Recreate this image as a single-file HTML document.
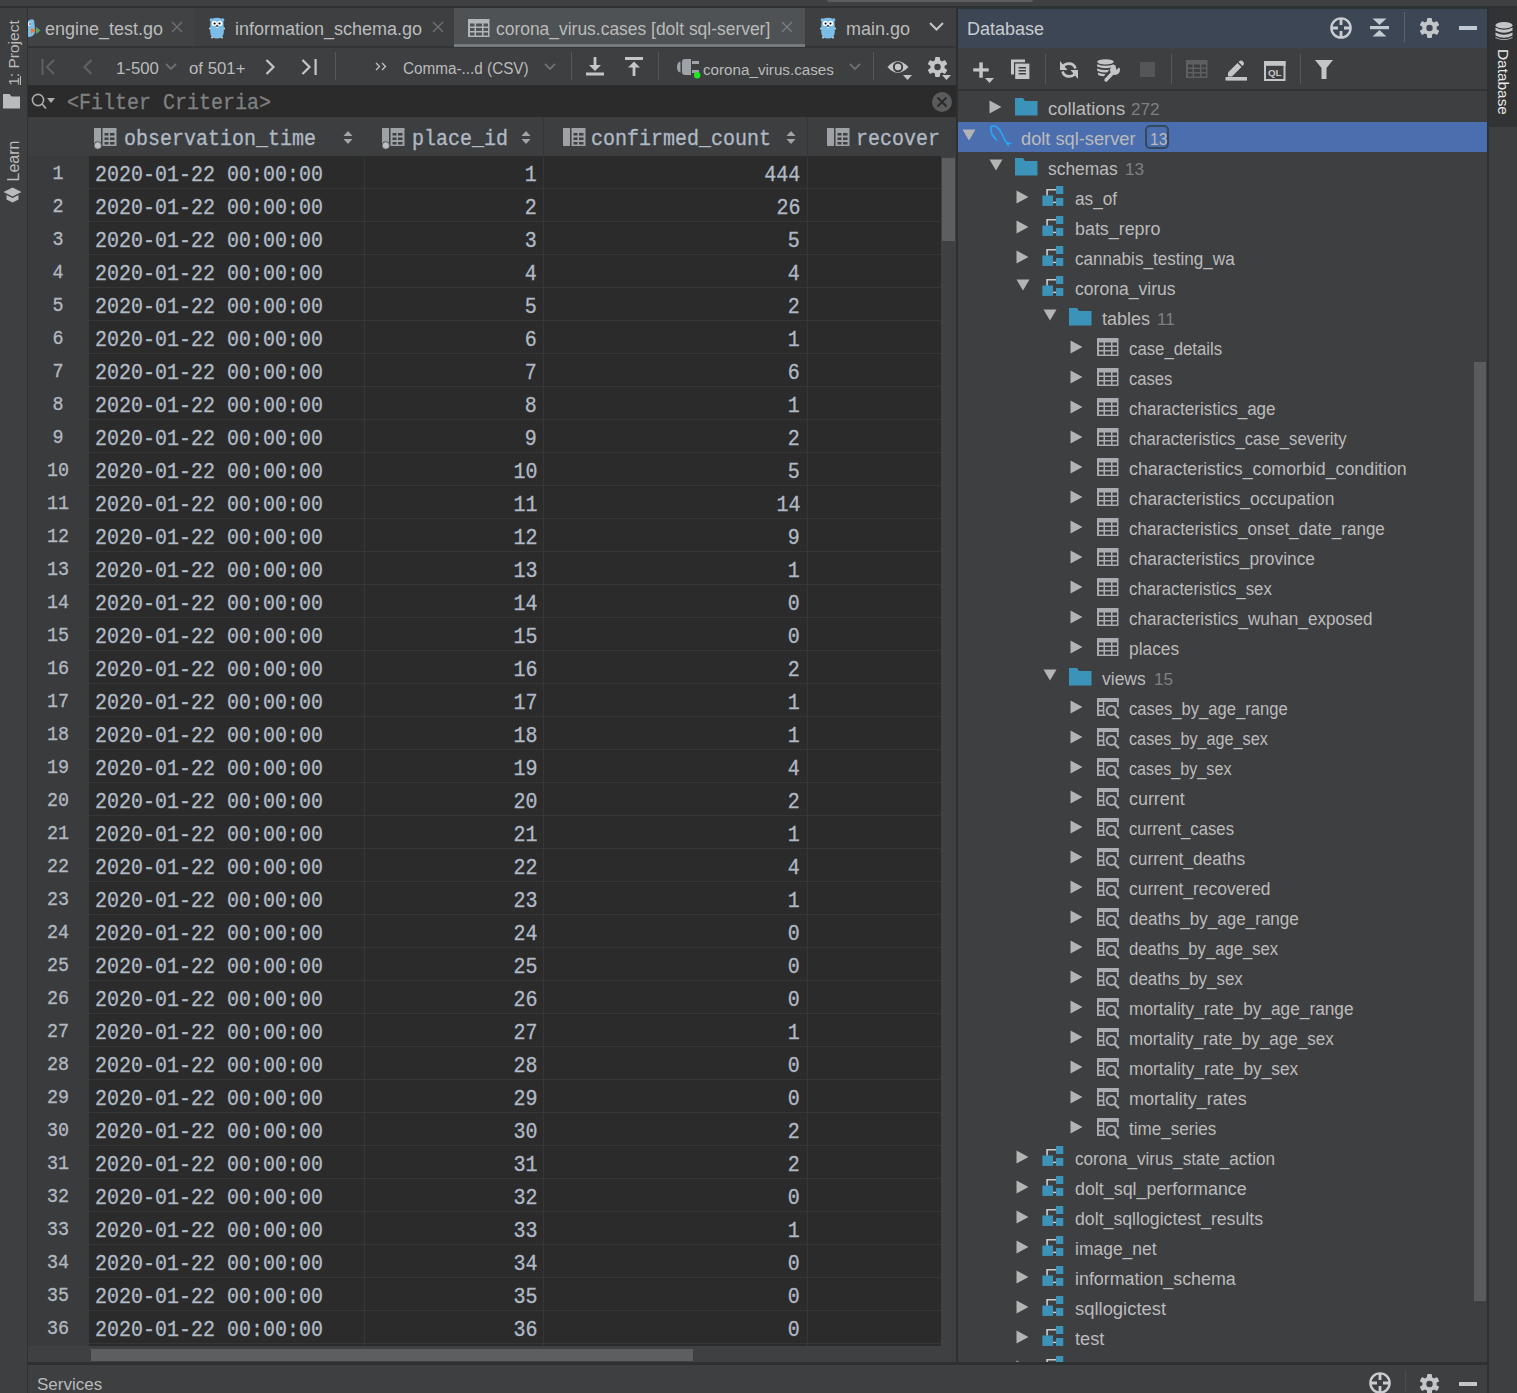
<!DOCTYPE html>
<html><head><meta charset="utf-8">
<style>
*{margin:0;padding:0;box-sizing:border-box}
html,body{width:1517px;height:1393px;overflow:hidden;background:#2f3133;font-family:"Liberation Sans",sans-serif;color:#bbbbbb}
.a{position:absolute}
.t{position:absolute;white-space:nowrap;line-height:20px}
.m{position:absolute;white-space:nowrap;font-family:"Liberation Mono",monospace;line-height:22px;-webkit-text-stroke:0.3px currentColor}
</style></head><body>
<div class="a" style="left:0px;top:0px;width:1517px;height:1393px;background:#3f4042;"></div>
<div class="a" style="left:827px;top:0px;width:206px;height:2px;background:#5c5d5f;border-radius:0 0 4px 4px"></div>
<div class="a" style="left:0px;top:6px;width:1517px;height:2px;background:#2f3133;"></div>
<div class="a" style="left:0px;top:8px;width:27px;height:1385px;background:#3d3f41;"></div>
<div class="a" style="left:27px;top:8px;width:1px;height:1385px;background:#303133;"></div>
<div class="a" style="left:28px;top:8px;width:928px;height:38px;background:#3d3f41;"></div>
<div class="a" style="left:28px;top:46px;width:928px;height:2px;background:#323436;"></div>
<div class="a" style="left:28px;top:48px;width:928px;height:37px;background:#3d3f41;"></div>
<div class="a" style="left:28px;top:85px;width:928px;height:32px;background:#2b2b2b;"></div>
<div class="a" style="left:28px;top:117px;width:928px;height:39px;background:#3c3e40;"></div>
<div class="a" style="left:28px;top:156px;width:61px;height:1206px;background:#3a3b3d;"></div>
<div class="a" style="left:89px;top:156px;width:852px;height:1190px;background:#2b2b2b;"></div>
<div class="a" style="left:941px;top:156px;width:15px;height:1206px;background:#3f4042;"></div>
<div class="a" style="left:28px;top:1346px;width:913px;height:16px;background:#3f4042;"></div>
<div class="a" style="left:956px;top:8px;width:2px;height:1385px;background:#2e2f31;"></div>
<div class="a" style="left:958px;top:6px;width:529px;height:3px;background:#2d3331;"></div>
<div class="a" style="left:958px;top:9px;width:529px;height:39px;background:#3d4654;"></div>
<div class="a" style="left:958px;top:48px;width:529px;height:41px;background:#3d3f41;"></div>
<div class="a" style="left:958px;top:89px;width:529px;height:2px;background:#313335;"></div>
<div class="a" style="left:958px;top:91px;width:529px;height:1271px;background:#3e3f41;"></div>
<div class="a" style="left:1487px;top:8px;width:2px;height:1385px;background:#2e2f31;"></div>
<div class="a" style="left:1489px;top:8px;width:28px;height:1385px;background:#3d3f41;"></div>
<div class="a" style="left:1489px;top:8px;width:28px;height:119px;background:#313335;"></div>
<div class="a" style="left:89px;top:188px;width:852px;height:1px;background:#353637;"></div>
<div class="m" style="left:18px;width:80px;top:161.50px;font-size:19.5px;line-height:24px;text-align:center;transform:scaleX(0.9434);transform-origin:50% 0;color:#b2b8c0;">1</div>
<div class="m" style="left:95px;top:163.35px;font-size:21.2px;line-height:24px;transform:scaleX(0.9434);transform-origin:0 0;color:#b0bac6;">2020-01-22 00:00:00</div>
<div class="m" style="right:980px;top:163.35px;font-size:21.2px;line-height:24px;text-align:right;transform:scaleX(0.9434);transform-origin:100% 0;color:#b0bac6;">1</div>
<div class="m" style="right:717px;top:163.35px;font-size:21.2px;line-height:24px;text-align:right;transform:scaleX(0.9434);transform-origin:100% 0;color:#b0bac6;">444</div>
<div class="a" style="left:89px;top:221px;width:852px;height:1px;background:#353637;"></div>
<div class="m" style="left:18px;width:80px;top:194.50px;font-size:19.5px;line-height:24px;text-align:center;transform:scaleX(0.9434);transform-origin:50% 0;color:#b2b8c0;">2</div>
<div class="m" style="left:95px;top:196.35px;font-size:21.2px;line-height:24px;transform:scaleX(0.9434);transform-origin:0 0;color:#b0bac6;">2020-01-22 00:00:00</div>
<div class="m" style="right:980px;top:196.35px;font-size:21.2px;line-height:24px;text-align:right;transform:scaleX(0.9434);transform-origin:100% 0;color:#b0bac6;">2</div>
<div class="m" style="right:717px;top:196.35px;font-size:21.2px;line-height:24px;text-align:right;transform:scaleX(0.9434);transform-origin:100% 0;color:#b0bac6;">26</div>
<div class="a" style="left:89px;top:254px;width:852px;height:1px;background:#353637;"></div>
<div class="m" style="left:18px;width:80px;top:227.50px;font-size:19.5px;line-height:24px;text-align:center;transform:scaleX(0.9434);transform-origin:50% 0;color:#b2b8c0;">3</div>
<div class="m" style="left:95px;top:229.35px;font-size:21.2px;line-height:24px;transform:scaleX(0.9434);transform-origin:0 0;color:#b0bac6;">2020-01-22 00:00:00</div>
<div class="m" style="right:980px;top:229.35px;font-size:21.2px;line-height:24px;text-align:right;transform:scaleX(0.9434);transform-origin:100% 0;color:#b0bac6;">3</div>
<div class="m" style="right:717px;top:229.35px;font-size:21.2px;line-height:24px;text-align:right;transform:scaleX(0.9434);transform-origin:100% 0;color:#b0bac6;">5</div>
<div class="a" style="left:89px;top:287px;width:852px;height:1px;background:#353637;"></div>
<div class="m" style="left:18px;width:80px;top:260.50px;font-size:19.5px;line-height:24px;text-align:center;transform:scaleX(0.9434);transform-origin:50% 0;color:#b2b8c0;">4</div>
<div class="m" style="left:95px;top:262.35px;font-size:21.2px;line-height:24px;transform:scaleX(0.9434);transform-origin:0 0;color:#b0bac6;">2020-01-22 00:00:00</div>
<div class="m" style="right:980px;top:262.35px;font-size:21.2px;line-height:24px;text-align:right;transform:scaleX(0.9434);transform-origin:100% 0;color:#b0bac6;">4</div>
<div class="m" style="right:717px;top:262.35px;font-size:21.2px;line-height:24px;text-align:right;transform:scaleX(0.9434);transform-origin:100% 0;color:#b0bac6;">4</div>
<div class="a" style="left:89px;top:320px;width:852px;height:1px;background:#353637;"></div>
<div class="m" style="left:18px;width:80px;top:293.50px;font-size:19.5px;line-height:24px;text-align:center;transform:scaleX(0.9434);transform-origin:50% 0;color:#b2b8c0;">5</div>
<div class="m" style="left:95px;top:295.35px;font-size:21.2px;line-height:24px;transform:scaleX(0.9434);transform-origin:0 0;color:#b0bac6;">2020-01-22 00:00:00</div>
<div class="m" style="right:980px;top:295.35px;font-size:21.2px;line-height:24px;text-align:right;transform:scaleX(0.9434);transform-origin:100% 0;color:#b0bac6;">5</div>
<div class="m" style="right:717px;top:295.35px;font-size:21.2px;line-height:24px;text-align:right;transform:scaleX(0.9434);transform-origin:100% 0;color:#b0bac6;">2</div>
<div class="a" style="left:89px;top:353px;width:852px;height:1px;background:#353637;"></div>
<div class="m" style="left:18px;width:80px;top:326.50px;font-size:19.5px;line-height:24px;text-align:center;transform:scaleX(0.9434);transform-origin:50% 0;color:#b2b8c0;">6</div>
<div class="m" style="left:95px;top:328.35px;font-size:21.2px;line-height:24px;transform:scaleX(0.9434);transform-origin:0 0;color:#b0bac6;">2020-01-22 00:00:00</div>
<div class="m" style="right:980px;top:328.35px;font-size:21.2px;line-height:24px;text-align:right;transform:scaleX(0.9434);transform-origin:100% 0;color:#b0bac6;">6</div>
<div class="m" style="right:717px;top:328.35px;font-size:21.2px;line-height:24px;text-align:right;transform:scaleX(0.9434);transform-origin:100% 0;color:#b0bac6;">1</div>
<div class="a" style="left:89px;top:386px;width:852px;height:1px;background:#353637;"></div>
<div class="m" style="left:18px;width:80px;top:359.50px;font-size:19.5px;line-height:24px;text-align:center;transform:scaleX(0.9434);transform-origin:50% 0;color:#b2b8c0;">7</div>
<div class="m" style="left:95px;top:361.35px;font-size:21.2px;line-height:24px;transform:scaleX(0.9434);transform-origin:0 0;color:#b0bac6;">2020-01-22 00:00:00</div>
<div class="m" style="right:980px;top:361.35px;font-size:21.2px;line-height:24px;text-align:right;transform:scaleX(0.9434);transform-origin:100% 0;color:#b0bac6;">7</div>
<div class="m" style="right:717px;top:361.35px;font-size:21.2px;line-height:24px;text-align:right;transform:scaleX(0.9434);transform-origin:100% 0;color:#b0bac6;">6</div>
<div class="a" style="left:89px;top:419px;width:852px;height:1px;background:#353637;"></div>
<div class="m" style="left:18px;width:80px;top:392.50px;font-size:19.5px;line-height:24px;text-align:center;transform:scaleX(0.9434);transform-origin:50% 0;color:#b2b8c0;">8</div>
<div class="m" style="left:95px;top:394.35px;font-size:21.2px;line-height:24px;transform:scaleX(0.9434);transform-origin:0 0;color:#b0bac6;">2020-01-22 00:00:00</div>
<div class="m" style="right:980px;top:394.35px;font-size:21.2px;line-height:24px;text-align:right;transform:scaleX(0.9434);transform-origin:100% 0;color:#b0bac6;">8</div>
<div class="m" style="right:717px;top:394.35px;font-size:21.2px;line-height:24px;text-align:right;transform:scaleX(0.9434);transform-origin:100% 0;color:#b0bac6;">1</div>
<div class="a" style="left:89px;top:452px;width:852px;height:1px;background:#353637;"></div>
<div class="m" style="left:18px;width:80px;top:425.50px;font-size:19.5px;line-height:24px;text-align:center;transform:scaleX(0.9434);transform-origin:50% 0;color:#b2b8c0;">9</div>
<div class="m" style="left:95px;top:427.35px;font-size:21.2px;line-height:24px;transform:scaleX(0.9434);transform-origin:0 0;color:#b0bac6;">2020-01-22 00:00:00</div>
<div class="m" style="right:980px;top:427.35px;font-size:21.2px;line-height:24px;text-align:right;transform:scaleX(0.9434);transform-origin:100% 0;color:#b0bac6;">9</div>
<div class="m" style="right:717px;top:427.35px;font-size:21.2px;line-height:24px;text-align:right;transform:scaleX(0.9434);transform-origin:100% 0;color:#b0bac6;">2</div>
<div class="a" style="left:89px;top:485px;width:852px;height:1px;background:#353637;"></div>
<div class="m" style="left:18px;width:80px;top:458.50px;font-size:19.5px;line-height:24px;text-align:center;transform:scaleX(0.9434);transform-origin:50% 0;color:#b2b8c0;">10</div>
<div class="m" style="left:95px;top:460.35px;font-size:21.2px;line-height:24px;transform:scaleX(0.9434);transform-origin:0 0;color:#b0bac6;">2020-01-22 00:00:00</div>
<div class="m" style="right:980px;top:460.35px;font-size:21.2px;line-height:24px;text-align:right;transform:scaleX(0.9434);transform-origin:100% 0;color:#b0bac6;">10</div>
<div class="m" style="right:717px;top:460.35px;font-size:21.2px;line-height:24px;text-align:right;transform:scaleX(0.9434);transform-origin:100% 0;color:#b0bac6;">5</div>
<div class="a" style="left:89px;top:518px;width:852px;height:1px;background:#353637;"></div>
<div class="m" style="left:18px;width:80px;top:491.50px;font-size:19.5px;line-height:24px;text-align:center;transform:scaleX(0.9434);transform-origin:50% 0;color:#b2b8c0;">11</div>
<div class="m" style="left:95px;top:493.35px;font-size:21.2px;line-height:24px;transform:scaleX(0.9434);transform-origin:0 0;color:#b0bac6;">2020-01-22 00:00:00</div>
<div class="m" style="right:980px;top:493.35px;font-size:21.2px;line-height:24px;text-align:right;transform:scaleX(0.9434);transform-origin:100% 0;color:#b0bac6;">11</div>
<div class="m" style="right:717px;top:493.35px;font-size:21.2px;line-height:24px;text-align:right;transform:scaleX(0.9434);transform-origin:100% 0;color:#b0bac6;">14</div>
<div class="a" style="left:89px;top:551px;width:852px;height:1px;background:#353637;"></div>
<div class="m" style="left:18px;width:80px;top:524.50px;font-size:19.5px;line-height:24px;text-align:center;transform:scaleX(0.9434);transform-origin:50% 0;color:#b2b8c0;">12</div>
<div class="m" style="left:95px;top:526.35px;font-size:21.2px;line-height:24px;transform:scaleX(0.9434);transform-origin:0 0;color:#b0bac6;">2020-01-22 00:00:00</div>
<div class="m" style="right:980px;top:526.35px;font-size:21.2px;line-height:24px;text-align:right;transform:scaleX(0.9434);transform-origin:100% 0;color:#b0bac6;">12</div>
<div class="m" style="right:717px;top:526.35px;font-size:21.2px;line-height:24px;text-align:right;transform:scaleX(0.9434);transform-origin:100% 0;color:#b0bac6;">9</div>
<div class="a" style="left:89px;top:584px;width:852px;height:1px;background:#353637;"></div>
<div class="m" style="left:18px;width:80px;top:557.50px;font-size:19.5px;line-height:24px;text-align:center;transform:scaleX(0.9434);transform-origin:50% 0;color:#b2b8c0;">13</div>
<div class="m" style="left:95px;top:559.35px;font-size:21.2px;line-height:24px;transform:scaleX(0.9434);transform-origin:0 0;color:#b0bac6;">2020-01-22 00:00:00</div>
<div class="m" style="right:980px;top:559.35px;font-size:21.2px;line-height:24px;text-align:right;transform:scaleX(0.9434);transform-origin:100% 0;color:#b0bac6;">13</div>
<div class="m" style="right:717px;top:559.35px;font-size:21.2px;line-height:24px;text-align:right;transform:scaleX(0.9434);transform-origin:100% 0;color:#b0bac6;">1</div>
<div class="a" style="left:89px;top:617px;width:852px;height:1px;background:#353637;"></div>
<div class="m" style="left:18px;width:80px;top:590.50px;font-size:19.5px;line-height:24px;text-align:center;transform:scaleX(0.9434);transform-origin:50% 0;color:#b2b8c0;">14</div>
<div class="m" style="left:95px;top:592.35px;font-size:21.2px;line-height:24px;transform:scaleX(0.9434);transform-origin:0 0;color:#b0bac6;">2020-01-22 00:00:00</div>
<div class="m" style="right:980px;top:592.35px;font-size:21.2px;line-height:24px;text-align:right;transform:scaleX(0.9434);transform-origin:100% 0;color:#b0bac6;">14</div>
<div class="m" style="right:717px;top:592.35px;font-size:21.2px;line-height:24px;text-align:right;transform:scaleX(0.9434);transform-origin:100% 0;color:#b0bac6;">0</div>
<div class="a" style="left:89px;top:650px;width:852px;height:1px;background:#353637;"></div>
<div class="m" style="left:18px;width:80px;top:623.50px;font-size:19.5px;line-height:24px;text-align:center;transform:scaleX(0.9434);transform-origin:50% 0;color:#b2b8c0;">15</div>
<div class="m" style="left:95px;top:625.35px;font-size:21.2px;line-height:24px;transform:scaleX(0.9434);transform-origin:0 0;color:#b0bac6;">2020-01-22 00:00:00</div>
<div class="m" style="right:980px;top:625.35px;font-size:21.2px;line-height:24px;text-align:right;transform:scaleX(0.9434);transform-origin:100% 0;color:#b0bac6;">15</div>
<div class="m" style="right:717px;top:625.35px;font-size:21.2px;line-height:24px;text-align:right;transform:scaleX(0.9434);transform-origin:100% 0;color:#b0bac6;">0</div>
<div class="a" style="left:89px;top:683px;width:852px;height:1px;background:#353637;"></div>
<div class="m" style="left:18px;width:80px;top:656.50px;font-size:19.5px;line-height:24px;text-align:center;transform:scaleX(0.9434);transform-origin:50% 0;color:#b2b8c0;">16</div>
<div class="m" style="left:95px;top:658.35px;font-size:21.2px;line-height:24px;transform:scaleX(0.9434);transform-origin:0 0;color:#b0bac6;">2020-01-22 00:00:00</div>
<div class="m" style="right:980px;top:658.35px;font-size:21.2px;line-height:24px;text-align:right;transform:scaleX(0.9434);transform-origin:100% 0;color:#b0bac6;">16</div>
<div class="m" style="right:717px;top:658.35px;font-size:21.2px;line-height:24px;text-align:right;transform:scaleX(0.9434);transform-origin:100% 0;color:#b0bac6;">2</div>
<div class="a" style="left:89px;top:716px;width:852px;height:1px;background:#353637;"></div>
<div class="m" style="left:18px;width:80px;top:689.50px;font-size:19.5px;line-height:24px;text-align:center;transform:scaleX(0.9434);transform-origin:50% 0;color:#b2b8c0;">17</div>
<div class="m" style="left:95px;top:691.35px;font-size:21.2px;line-height:24px;transform:scaleX(0.9434);transform-origin:0 0;color:#b0bac6;">2020-01-22 00:00:00</div>
<div class="m" style="right:980px;top:691.35px;font-size:21.2px;line-height:24px;text-align:right;transform:scaleX(0.9434);transform-origin:100% 0;color:#b0bac6;">17</div>
<div class="m" style="right:717px;top:691.35px;font-size:21.2px;line-height:24px;text-align:right;transform:scaleX(0.9434);transform-origin:100% 0;color:#b0bac6;">1</div>
<div class="a" style="left:89px;top:749px;width:852px;height:1px;background:#353637;"></div>
<div class="m" style="left:18px;width:80px;top:722.50px;font-size:19.5px;line-height:24px;text-align:center;transform:scaleX(0.9434);transform-origin:50% 0;color:#b2b8c0;">18</div>
<div class="m" style="left:95px;top:724.35px;font-size:21.2px;line-height:24px;transform:scaleX(0.9434);transform-origin:0 0;color:#b0bac6;">2020-01-22 00:00:00</div>
<div class="m" style="right:980px;top:724.35px;font-size:21.2px;line-height:24px;text-align:right;transform:scaleX(0.9434);transform-origin:100% 0;color:#b0bac6;">18</div>
<div class="m" style="right:717px;top:724.35px;font-size:21.2px;line-height:24px;text-align:right;transform:scaleX(0.9434);transform-origin:100% 0;color:#b0bac6;">1</div>
<div class="a" style="left:89px;top:782px;width:852px;height:1px;background:#353637;"></div>
<div class="m" style="left:18px;width:80px;top:755.50px;font-size:19.5px;line-height:24px;text-align:center;transform:scaleX(0.9434);transform-origin:50% 0;color:#b2b8c0;">19</div>
<div class="m" style="left:95px;top:757.35px;font-size:21.2px;line-height:24px;transform:scaleX(0.9434);transform-origin:0 0;color:#b0bac6;">2020-01-22 00:00:00</div>
<div class="m" style="right:980px;top:757.35px;font-size:21.2px;line-height:24px;text-align:right;transform:scaleX(0.9434);transform-origin:100% 0;color:#b0bac6;">19</div>
<div class="m" style="right:717px;top:757.35px;font-size:21.2px;line-height:24px;text-align:right;transform:scaleX(0.9434);transform-origin:100% 0;color:#b0bac6;">4</div>
<div class="a" style="left:89px;top:815px;width:852px;height:1px;background:#353637;"></div>
<div class="m" style="left:18px;width:80px;top:788.50px;font-size:19.5px;line-height:24px;text-align:center;transform:scaleX(0.9434);transform-origin:50% 0;color:#b2b8c0;">20</div>
<div class="m" style="left:95px;top:790.35px;font-size:21.2px;line-height:24px;transform:scaleX(0.9434);transform-origin:0 0;color:#b0bac6;">2020-01-22 00:00:00</div>
<div class="m" style="right:980px;top:790.35px;font-size:21.2px;line-height:24px;text-align:right;transform:scaleX(0.9434);transform-origin:100% 0;color:#b0bac6;">20</div>
<div class="m" style="right:717px;top:790.35px;font-size:21.2px;line-height:24px;text-align:right;transform:scaleX(0.9434);transform-origin:100% 0;color:#b0bac6;">2</div>
<div class="a" style="left:89px;top:848px;width:852px;height:1px;background:#353637;"></div>
<div class="m" style="left:18px;width:80px;top:821.50px;font-size:19.5px;line-height:24px;text-align:center;transform:scaleX(0.9434);transform-origin:50% 0;color:#b2b8c0;">21</div>
<div class="m" style="left:95px;top:823.35px;font-size:21.2px;line-height:24px;transform:scaleX(0.9434);transform-origin:0 0;color:#b0bac6;">2020-01-22 00:00:00</div>
<div class="m" style="right:980px;top:823.35px;font-size:21.2px;line-height:24px;text-align:right;transform:scaleX(0.9434);transform-origin:100% 0;color:#b0bac6;">21</div>
<div class="m" style="right:717px;top:823.35px;font-size:21.2px;line-height:24px;text-align:right;transform:scaleX(0.9434);transform-origin:100% 0;color:#b0bac6;">1</div>
<div class="a" style="left:89px;top:881px;width:852px;height:1px;background:#353637;"></div>
<div class="m" style="left:18px;width:80px;top:854.50px;font-size:19.5px;line-height:24px;text-align:center;transform:scaleX(0.9434);transform-origin:50% 0;color:#b2b8c0;">22</div>
<div class="m" style="left:95px;top:856.35px;font-size:21.2px;line-height:24px;transform:scaleX(0.9434);transform-origin:0 0;color:#b0bac6;">2020-01-22 00:00:00</div>
<div class="m" style="right:980px;top:856.35px;font-size:21.2px;line-height:24px;text-align:right;transform:scaleX(0.9434);transform-origin:100% 0;color:#b0bac6;">22</div>
<div class="m" style="right:717px;top:856.35px;font-size:21.2px;line-height:24px;text-align:right;transform:scaleX(0.9434);transform-origin:100% 0;color:#b0bac6;">4</div>
<div class="a" style="left:89px;top:914px;width:852px;height:1px;background:#353637;"></div>
<div class="m" style="left:18px;width:80px;top:887.50px;font-size:19.5px;line-height:24px;text-align:center;transform:scaleX(0.9434);transform-origin:50% 0;color:#b2b8c0;">23</div>
<div class="m" style="left:95px;top:889.35px;font-size:21.2px;line-height:24px;transform:scaleX(0.9434);transform-origin:0 0;color:#b0bac6;">2020-01-22 00:00:00</div>
<div class="m" style="right:980px;top:889.35px;font-size:21.2px;line-height:24px;text-align:right;transform:scaleX(0.9434);transform-origin:100% 0;color:#b0bac6;">23</div>
<div class="m" style="right:717px;top:889.35px;font-size:21.2px;line-height:24px;text-align:right;transform:scaleX(0.9434);transform-origin:100% 0;color:#b0bac6;">1</div>
<div class="a" style="left:89px;top:947px;width:852px;height:1px;background:#353637;"></div>
<div class="m" style="left:18px;width:80px;top:920.50px;font-size:19.5px;line-height:24px;text-align:center;transform:scaleX(0.9434);transform-origin:50% 0;color:#b2b8c0;">24</div>
<div class="m" style="left:95px;top:922.35px;font-size:21.2px;line-height:24px;transform:scaleX(0.9434);transform-origin:0 0;color:#b0bac6;">2020-01-22 00:00:00</div>
<div class="m" style="right:980px;top:922.35px;font-size:21.2px;line-height:24px;text-align:right;transform:scaleX(0.9434);transform-origin:100% 0;color:#b0bac6;">24</div>
<div class="m" style="right:717px;top:922.35px;font-size:21.2px;line-height:24px;text-align:right;transform:scaleX(0.9434);transform-origin:100% 0;color:#b0bac6;">0</div>
<div class="a" style="left:89px;top:980px;width:852px;height:1px;background:#353637;"></div>
<div class="m" style="left:18px;width:80px;top:953.50px;font-size:19.5px;line-height:24px;text-align:center;transform:scaleX(0.9434);transform-origin:50% 0;color:#b2b8c0;">25</div>
<div class="m" style="left:95px;top:955.35px;font-size:21.2px;line-height:24px;transform:scaleX(0.9434);transform-origin:0 0;color:#b0bac6;">2020-01-22 00:00:00</div>
<div class="m" style="right:980px;top:955.35px;font-size:21.2px;line-height:24px;text-align:right;transform:scaleX(0.9434);transform-origin:100% 0;color:#b0bac6;">25</div>
<div class="m" style="right:717px;top:955.35px;font-size:21.2px;line-height:24px;text-align:right;transform:scaleX(0.9434);transform-origin:100% 0;color:#b0bac6;">0</div>
<div class="a" style="left:89px;top:1013px;width:852px;height:1px;background:#353637;"></div>
<div class="m" style="left:18px;width:80px;top:986.50px;font-size:19.5px;line-height:24px;text-align:center;transform:scaleX(0.9434);transform-origin:50% 0;color:#b2b8c0;">26</div>
<div class="m" style="left:95px;top:988.35px;font-size:21.2px;line-height:24px;transform:scaleX(0.9434);transform-origin:0 0;color:#b0bac6;">2020-01-22 00:00:00</div>
<div class="m" style="right:980px;top:988.35px;font-size:21.2px;line-height:24px;text-align:right;transform:scaleX(0.9434);transform-origin:100% 0;color:#b0bac6;">26</div>
<div class="m" style="right:717px;top:988.35px;font-size:21.2px;line-height:24px;text-align:right;transform:scaleX(0.9434);transform-origin:100% 0;color:#b0bac6;">0</div>
<div class="a" style="left:89px;top:1046px;width:852px;height:1px;background:#353637;"></div>
<div class="m" style="left:18px;width:80px;top:1019.50px;font-size:19.5px;line-height:24px;text-align:center;transform:scaleX(0.9434);transform-origin:50% 0;color:#b2b8c0;">27</div>
<div class="m" style="left:95px;top:1021.35px;font-size:21.2px;line-height:24px;transform:scaleX(0.9434);transform-origin:0 0;color:#b0bac6;">2020-01-22 00:00:00</div>
<div class="m" style="right:980px;top:1021.35px;font-size:21.2px;line-height:24px;text-align:right;transform:scaleX(0.9434);transform-origin:100% 0;color:#b0bac6;">27</div>
<div class="m" style="right:717px;top:1021.35px;font-size:21.2px;line-height:24px;text-align:right;transform:scaleX(0.9434);transform-origin:100% 0;color:#b0bac6;">1</div>
<div class="a" style="left:89px;top:1079px;width:852px;height:1px;background:#353637;"></div>
<div class="m" style="left:18px;width:80px;top:1052.50px;font-size:19.5px;line-height:24px;text-align:center;transform:scaleX(0.9434);transform-origin:50% 0;color:#b2b8c0;">28</div>
<div class="m" style="left:95px;top:1054.35px;font-size:21.2px;line-height:24px;transform:scaleX(0.9434);transform-origin:0 0;color:#b0bac6;">2020-01-22 00:00:00</div>
<div class="m" style="right:980px;top:1054.35px;font-size:21.2px;line-height:24px;text-align:right;transform:scaleX(0.9434);transform-origin:100% 0;color:#b0bac6;">28</div>
<div class="m" style="right:717px;top:1054.35px;font-size:21.2px;line-height:24px;text-align:right;transform:scaleX(0.9434);transform-origin:100% 0;color:#b0bac6;">0</div>
<div class="a" style="left:89px;top:1112px;width:852px;height:1px;background:#353637;"></div>
<div class="m" style="left:18px;width:80px;top:1085.50px;font-size:19.5px;line-height:24px;text-align:center;transform:scaleX(0.9434);transform-origin:50% 0;color:#b2b8c0;">29</div>
<div class="m" style="left:95px;top:1087.35px;font-size:21.2px;line-height:24px;transform:scaleX(0.9434);transform-origin:0 0;color:#b0bac6;">2020-01-22 00:00:00</div>
<div class="m" style="right:980px;top:1087.35px;font-size:21.2px;line-height:24px;text-align:right;transform:scaleX(0.9434);transform-origin:100% 0;color:#b0bac6;">29</div>
<div class="m" style="right:717px;top:1087.35px;font-size:21.2px;line-height:24px;text-align:right;transform:scaleX(0.9434);transform-origin:100% 0;color:#b0bac6;">0</div>
<div class="a" style="left:89px;top:1145px;width:852px;height:1px;background:#353637;"></div>
<div class="m" style="left:18px;width:80px;top:1118.50px;font-size:19.5px;line-height:24px;text-align:center;transform:scaleX(0.9434);transform-origin:50% 0;color:#b2b8c0;">30</div>
<div class="m" style="left:95px;top:1120.35px;font-size:21.2px;line-height:24px;transform:scaleX(0.9434);transform-origin:0 0;color:#b0bac6;">2020-01-22 00:00:00</div>
<div class="m" style="right:980px;top:1120.35px;font-size:21.2px;line-height:24px;text-align:right;transform:scaleX(0.9434);transform-origin:100% 0;color:#b0bac6;">30</div>
<div class="m" style="right:717px;top:1120.35px;font-size:21.2px;line-height:24px;text-align:right;transform:scaleX(0.9434);transform-origin:100% 0;color:#b0bac6;">2</div>
<div class="a" style="left:89px;top:1178px;width:852px;height:1px;background:#353637;"></div>
<div class="m" style="left:18px;width:80px;top:1151.50px;font-size:19.5px;line-height:24px;text-align:center;transform:scaleX(0.9434);transform-origin:50% 0;color:#b2b8c0;">31</div>
<div class="m" style="left:95px;top:1153.35px;font-size:21.2px;line-height:24px;transform:scaleX(0.9434);transform-origin:0 0;color:#b0bac6;">2020-01-22 00:00:00</div>
<div class="m" style="right:980px;top:1153.35px;font-size:21.2px;line-height:24px;text-align:right;transform:scaleX(0.9434);transform-origin:100% 0;color:#b0bac6;">31</div>
<div class="m" style="right:717px;top:1153.35px;font-size:21.2px;line-height:24px;text-align:right;transform:scaleX(0.9434);transform-origin:100% 0;color:#b0bac6;">2</div>
<div class="a" style="left:89px;top:1211px;width:852px;height:1px;background:#353637;"></div>
<div class="m" style="left:18px;width:80px;top:1184.50px;font-size:19.5px;line-height:24px;text-align:center;transform:scaleX(0.9434);transform-origin:50% 0;color:#b2b8c0;">32</div>
<div class="m" style="left:95px;top:1186.35px;font-size:21.2px;line-height:24px;transform:scaleX(0.9434);transform-origin:0 0;color:#b0bac6;">2020-01-22 00:00:00</div>
<div class="m" style="right:980px;top:1186.35px;font-size:21.2px;line-height:24px;text-align:right;transform:scaleX(0.9434);transform-origin:100% 0;color:#b0bac6;">32</div>
<div class="m" style="right:717px;top:1186.35px;font-size:21.2px;line-height:24px;text-align:right;transform:scaleX(0.9434);transform-origin:100% 0;color:#b0bac6;">0</div>
<div class="a" style="left:89px;top:1244px;width:852px;height:1px;background:#353637;"></div>
<div class="m" style="left:18px;width:80px;top:1217.50px;font-size:19.5px;line-height:24px;text-align:center;transform:scaleX(0.9434);transform-origin:50% 0;color:#b2b8c0;">33</div>
<div class="m" style="left:95px;top:1219.35px;font-size:21.2px;line-height:24px;transform:scaleX(0.9434);transform-origin:0 0;color:#b0bac6;">2020-01-22 00:00:00</div>
<div class="m" style="right:980px;top:1219.35px;font-size:21.2px;line-height:24px;text-align:right;transform:scaleX(0.9434);transform-origin:100% 0;color:#b0bac6;">33</div>
<div class="m" style="right:717px;top:1219.35px;font-size:21.2px;line-height:24px;text-align:right;transform:scaleX(0.9434);transform-origin:100% 0;color:#b0bac6;">1</div>
<div class="a" style="left:89px;top:1277px;width:852px;height:1px;background:#353637;"></div>
<div class="m" style="left:18px;width:80px;top:1250.50px;font-size:19.5px;line-height:24px;text-align:center;transform:scaleX(0.9434);transform-origin:50% 0;color:#b2b8c0;">34</div>
<div class="m" style="left:95px;top:1252.35px;font-size:21.2px;line-height:24px;transform:scaleX(0.9434);transform-origin:0 0;color:#b0bac6;">2020-01-22 00:00:00</div>
<div class="m" style="right:980px;top:1252.35px;font-size:21.2px;line-height:24px;text-align:right;transform:scaleX(0.9434);transform-origin:100% 0;color:#b0bac6;">34</div>
<div class="m" style="right:717px;top:1252.35px;font-size:21.2px;line-height:24px;text-align:right;transform:scaleX(0.9434);transform-origin:100% 0;color:#b0bac6;">0</div>
<div class="a" style="left:89px;top:1310px;width:852px;height:1px;background:#353637;"></div>
<div class="m" style="left:18px;width:80px;top:1283.50px;font-size:19.5px;line-height:24px;text-align:center;transform:scaleX(0.9434);transform-origin:50% 0;color:#b2b8c0;">35</div>
<div class="m" style="left:95px;top:1285.35px;font-size:21.2px;line-height:24px;transform:scaleX(0.9434);transform-origin:0 0;color:#b0bac6;">2020-01-22 00:00:00</div>
<div class="m" style="right:980px;top:1285.35px;font-size:21.2px;line-height:24px;text-align:right;transform:scaleX(0.9434);transform-origin:100% 0;color:#b0bac6;">35</div>
<div class="m" style="right:717px;top:1285.35px;font-size:21.2px;line-height:24px;text-align:right;transform:scaleX(0.9434);transform-origin:100% 0;color:#b0bac6;">0</div>
<div class="a" style="left:89px;top:1343px;width:852px;height:1px;background:#353637;"></div>
<div class="m" style="left:18px;width:80px;top:1316.50px;font-size:19.5px;line-height:24px;text-align:center;transform:scaleX(0.9434);transform-origin:50% 0;color:#b2b8c0;">36</div>
<div class="m" style="left:95px;top:1318.35px;font-size:21.2px;line-height:24px;transform:scaleX(0.9434);transform-origin:0 0;color:#b0bac6;">2020-01-22 00:00:00</div>
<div class="m" style="right:980px;top:1318.35px;font-size:21.2px;line-height:24px;text-align:right;transform:scaleX(0.9434);transform-origin:100% 0;color:#b0bac6;">36</div>
<div class="m" style="right:717px;top:1318.35px;font-size:21.2px;line-height:24px;text-align:right;transform:scaleX(0.9434);transform-origin:100% 0;color:#b0bac6;">0</div>
<div class="a" style="left:364px;top:155px;width:1px;height:1191px;background:#353637;"></div>
<div class="a" style="left:543px;top:117px;width:1px;height:1229px;background:#353637;"></div>
<div class="a" style="left:807px;top:117px;width:1px;height:1229px;background:#353637;"></div>
<div class="m" style="left:123.5px;top:127.35px;font-size:21.2px;line-height:24px;transform:scaleX(0.9434);transform-origin:0 0;color:#b0bac6;">observation_time</div>
<div class="m" style="left:411.5px;top:127.35px;font-size:21.2px;line-height:24px;transform:scaleX(0.9434);transform-origin:0 0;color:#b0bac6;">place_id</div>
<div class="m" style="left:591px;top:127.35px;font-size:21.2px;line-height:24px;transform:scaleX(0.9434);transform-origin:0 0;color:#b0bac6;">confirmed_count</div>
<div class="m" style="left:856px;top:127.35px;font-size:21.2px;line-height:24px;transform:scaleX(0.9434);transform-origin:0 0;color:#b0bac6;">recover</div>
<div class="m" style="left:67px;top:91.35px;font-size:21.2px;line-height:24px;transform:scaleX(0.9434);transform-origin:0 0;color:#7f8081;">&lt;Filter Criteria&gt;</div>
<div class="a" style="left:958px;top:122px;width:529px;height:30px;background:#4b6eaf;"></div>
<svg class="a" style="left:989px;top:100.1px" width="13" height="14" viewBox="0 0 13 14"><polygon points="0.5,0.5 12.5,7 0.5,13.5" fill="#b4b4b4"/></svg>
<svg class="a" style="left:1015px;top:98px" width="23" height="18" viewBox="0 0 23 18"><path d="M0,0 H8 L10,3 H22.5 V17.5 H0 Z" fill="#3c93ba"/></svg>
<div class="t" style="left:1048px;top:99.06px;font-size:18px;line-height:20px;transform:scaleX(1.028);transform-origin:0 0;">collations</div>
<svg class="a" style="left:962px;top:129px" width="14" height="12" viewBox="0 0 14 12"><polygon points="0.5,0.5 13.5,0.5 7,11.5" fill="#b4b4b4"/></svg>
<svg class="a" style="left:989px;top:124px" width="24" height="26" viewBox="0 0 24 26"><path d="M2,2.5 C6,0.5 10,3.5 12.5,9 L16,16.5 L19.5,21.5 M17.5,18.5 L21.5,19.5 M2,2.5 C1.5,8 3.5,12 5.5,14 M4.5,12 L7.5,16" stroke="#2aa4f4" stroke-width="1.7" fill="none" stroke-linecap="round"/></svg>
<div class="t" style="left:1021px;top:129.06px;font-size:18px;line-height:20px;transform:scaleX(1.013);transform-origin:0 0;">dolt sql-server</div>
<svg class="a" style="left:989px;top:159px" width="14" height="12" viewBox="0 0 14 12"><polygon points="0.5,0.5 13.5,0.5 7,11.5" fill="#b4b4b4"/></svg>
<svg class="a" style="left:1015px;top:158px" width="23" height="18" viewBox="0 0 23 18"><path d="M0,0 H8 L10,3 H22.5 V17.5 H0 Z" fill="#3c93ba"/></svg>
<div class="t" style="left:1048px;top:159.06px;font-size:18px;line-height:20px;transform:scaleX(0.968);transform-origin:0 0;">schemas</div>
<svg class="a" style="left:1016px;top:190.1px" width="13" height="14" viewBox="0 0 13 14"><polygon points="0.5,0.5 12.5,7 0.5,13.5" fill="#b4b4b4"/></svg>
<svg class="a" style="left:1042px;top:186px" width="22" height="20" viewBox="0 0 22 20"><rect x="14" y="0" width="7.3" height="8" fill="#3c93ba"/><rect x="0.4" y="9.5" width="10.6" height="10.4" fill="#3c93ba"/><rect x="14" y="12" width="7.3" height="7.9" fill="#3c93ba"/><path d="M5.1,9.5 V3.7 H14" stroke="#c8cdd0" stroke-width="1.6" fill="none"/><path d="M11,16.4 H14" stroke="#c8cdd0" stroke-width="1.4" fill="none"/></svg>
<div class="t" style="left:1075px;top:189.06px;font-size:18px;line-height:20px;transform:scaleX(0.957);transform-origin:0 0;">as_of</div>
<svg class="a" style="left:1016px;top:220.1px" width="13" height="14" viewBox="0 0 13 14"><polygon points="0.5,0.5 12.5,7 0.5,13.5" fill="#b4b4b4"/></svg>
<svg class="a" style="left:1042px;top:216px" width="22" height="20" viewBox="0 0 22 20"><rect x="14" y="0" width="7.3" height="8" fill="#3c93ba"/><rect x="0.4" y="9.5" width="10.6" height="10.4" fill="#3c93ba"/><rect x="14" y="12" width="7.3" height="7.9" fill="#3c93ba"/><path d="M5.1,9.5 V3.7 H14" stroke="#c8cdd0" stroke-width="1.6" fill="none"/><path d="M11,16.4 H14" stroke="#c8cdd0" stroke-width="1.4" fill="none"/></svg>
<div class="t" style="left:1075px;top:219.06px;font-size:18px;line-height:20px;transform:scaleX(0.993);transform-origin:0 0;">bats_repro</div>
<svg class="a" style="left:1016px;top:250.1px" width="13" height="14" viewBox="0 0 13 14"><polygon points="0.5,0.5 12.5,7 0.5,13.5" fill="#b4b4b4"/></svg>
<svg class="a" style="left:1042px;top:246px" width="22" height="20" viewBox="0 0 22 20"><rect x="14" y="0" width="7.3" height="8" fill="#3c93ba"/><rect x="0.4" y="9.5" width="10.6" height="10.4" fill="#3c93ba"/><rect x="14" y="12" width="7.3" height="7.9" fill="#3c93ba"/><path d="M5.1,9.5 V3.7 H14" stroke="#c8cdd0" stroke-width="1.6" fill="none"/><path d="M11,16.4 H14" stroke="#c8cdd0" stroke-width="1.4" fill="none"/></svg>
<div class="t" style="left:1075px;top:249.06px;font-size:18px;line-height:20px;transform:scaleX(0.95);transform-origin:0 0;">cannabis_testing_wa</div>
<svg class="a" style="left:1016px;top:279px" width="14" height="12" viewBox="0 0 14 12"><polygon points="0.5,0.5 13.5,0.5 7,11.5" fill="#b4b4b4"/></svg>
<svg class="a" style="left:1042px;top:276px" width="22" height="20" viewBox="0 0 22 20"><rect x="14" y="0" width="7.3" height="8" fill="#3c93ba"/><rect x="0.4" y="9.5" width="10.6" height="10.4" fill="#3c93ba"/><rect x="14" y="12" width="7.3" height="7.9" fill="#3c93ba"/><path d="M5.1,9.5 V3.7 H14" stroke="#c8cdd0" stroke-width="1.6" fill="none"/><path d="M11,16.4 H14" stroke="#c8cdd0" stroke-width="1.4" fill="none"/></svg>
<div class="t" style="left:1075px;top:279.06px;font-size:18px;line-height:20px;transform:scaleX(0.976);transform-origin:0 0;">corona_virus</div>
<svg class="a" style="left:1043px;top:309px" width="14" height="12" viewBox="0 0 14 12"><polygon points="0.5,0.5 13.5,0.5 7,11.5" fill="#b4b4b4"/></svg>
<svg class="a" style="left:1069px;top:308px" width="23" height="18" viewBox="0 0 23 18"><path d="M0,0 H8 L10,3 H22.5 V17.5 H0 Z" fill="#3c93ba"/></svg>
<div class="t" style="left:1102px;top:309.06px;font-size:18px;line-height:20px;transform:scaleX(1.002);transform-origin:0 0;">tables</div>
<svg class="a" style="left:1070px;top:340.1px" width="13" height="14" viewBox="0 0 13 14"><polygon points="0.5,0.5 12.5,7 0.5,13.5" fill="#b4b4b4"/></svg>
<svg class="a" style="left:1097px;top:338px" width="22" height="18" viewBox="0 0 22 18"><rect x="0" y="0" width="21.5" height="18" fill="#a9adb2"/><rect x="2" y="4.5" width="4.5" height="3" fill="#3e3f41"/><rect x="8" y="4.5" width="6" height="3" fill="#3e3f41"/><rect x="15.5" y="4.5" width="4.5" height="3" fill="#3e3f41"/><rect x="2" y="9" width="4.5" height="3" fill="#3e3f41"/><rect x="8" y="9" width="6" height="3" fill="#3e3f41"/><rect x="15.5" y="9" width="4.5" height="3" fill="#3e3f41"/><rect x="2" y="13.5" width="4.5" height="3" fill="#3e3f41"/><rect x="8" y="13.5" width="6" height="3" fill="#3e3f41"/><rect x="15.5" y="13.5" width="4.5" height="3" fill="#3e3f41"/></svg>
<div class="t" style="left:1129px;top:339.06px;font-size:18px;line-height:20px;transform:scaleX(0.931);transform-origin:0 0;">case_details</div>
<svg class="a" style="left:1070px;top:370.1px" width="13" height="14" viewBox="0 0 13 14"><polygon points="0.5,0.5 12.5,7 0.5,13.5" fill="#b4b4b4"/></svg>
<svg class="a" style="left:1097px;top:368px" width="22" height="18" viewBox="0 0 22 18"><rect x="0" y="0" width="21.5" height="18" fill="#a9adb2"/><rect x="2" y="4.5" width="4.5" height="3" fill="#3e3f41"/><rect x="8" y="4.5" width="6" height="3" fill="#3e3f41"/><rect x="15.5" y="4.5" width="4.5" height="3" fill="#3e3f41"/><rect x="2" y="9" width="4.5" height="3" fill="#3e3f41"/><rect x="8" y="9" width="6" height="3" fill="#3e3f41"/><rect x="15.5" y="9" width="4.5" height="3" fill="#3e3f41"/><rect x="2" y="13.5" width="4.5" height="3" fill="#3e3f41"/><rect x="8" y="13.5" width="6" height="3" fill="#3e3f41"/><rect x="15.5" y="13.5" width="4.5" height="3" fill="#3e3f41"/></svg>
<div class="t" style="left:1129px;top:369.06px;font-size:18px;line-height:20px;transform:scaleX(0.923);transform-origin:0 0;">cases</div>
<svg class="a" style="left:1070px;top:400.1px" width="13" height="14" viewBox="0 0 13 14"><polygon points="0.5,0.5 12.5,7 0.5,13.5" fill="#b4b4b4"/></svg>
<svg class="a" style="left:1097px;top:398px" width="22" height="18" viewBox="0 0 22 18"><rect x="0" y="0" width="21.5" height="18" fill="#a9adb2"/><rect x="2" y="4.5" width="4.5" height="3" fill="#3e3f41"/><rect x="8" y="4.5" width="6" height="3" fill="#3e3f41"/><rect x="15.5" y="4.5" width="4.5" height="3" fill="#3e3f41"/><rect x="2" y="9" width="4.5" height="3" fill="#3e3f41"/><rect x="8" y="9" width="6" height="3" fill="#3e3f41"/><rect x="15.5" y="9" width="4.5" height="3" fill="#3e3f41"/><rect x="2" y="13.5" width="4.5" height="3" fill="#3e3f41"/><rect x="8" y="13.5" width="6" height="3" fill="#3e3f41"/><rect x="15.5" y="13.5" width="4.5" height="3" fill="#3e3f41"/></svg>
<div class="t" style="left:1129px;top:399.06px;font-size:18px;line-height:20px;transform:scaleX(0.945);transform-origin:0 0;">characteristics_age</div>
<svg class="a" style="left:1070px;top:430.1px" width="13" height="14" viewBox="0 0 13 14"><polygon points="0.5,0.5 12.5,7 0.5,13.5" fill="#b4b4b4"/></svg>
<svg class="a" style="left:1097px;top:428px" width="22" height="18" viewBox="0 0 22 18"><rect x="0" y="0" width="21.5" height="18" fill="#a9adb2"/><rect x="2" y="4.5" width="4.5" height="3" fill="#3e3f41"/><rect x="8" y="4.5" width="6" height="3" fill="#3e3f41"/><rect x="15.5" y="4.5" width="4.5" height="3" fill="#3e3f41"/><rect x="2" y="9" width="4.5" height="3" fill="#3e3f41"/><rect x="8" y="9" width="6" height="3" fill="#3e3f41"/><rect x="15.5" y="9" width="4.5" height="3" fill="#3e3f41"/><rect x="2" y="13.5" width="4.5" height="3" fill="#3e3f41"/><rect x="8" y="13.5" width="6" height="3" fill="#3e3f41"/><rect x="15.5" y="13.5" width="4.5" height="3" fill="#3e3f41"/></svg>
<div class="t" style="left:1129px;top:429.06px;font-size:18px;line-height:20px;transform:scaleX(0.925);transform-origin:0 0;">characteristics_case_severity</div>
<svg class="a" style="left:1070px;top:460.1px" width="13" height="14" viewBox="0 0 13 14"><polygon points="0.5,0.5 12.5,7 0.5,13.5" fill="#b4b4b4"/></svg>
<svg class="a" style="left:1097px;top:458px" width="22" height="18" viewBox="0 0 22 18"><rect x="0" y="0" width="21.5" height="18" fill="#a9adb2"/><rect x="2" y="4.5" width="4.5" height="3" fill="#3e3f41"/><rect x="8" y="4.5" width="6" height="3" fill="#3e3f41"/><rect x="15.5" y="4.5" width="4.5" height="3" fill="#3e3f41"/><rect x="2" y="9" width="4.5" height="3" fill="#3e3f41"/><rect x="8" y="9" width="6" height="3" fill="#3e3f41"/><rect x="15.5" y="9" width="4.5" height="3" fill="#3e3f41"/><rect x="2" y="13.5" width="4.5" height="3" fill="#3e3f41"/><rect x="8" y="13.5" width="6" height="3" fill="#3e3f41"/><rect x="15.5" y="13.5" width="4.5" height="3" fill="#3e3f41"/></svg>
<div class="t" style="left:1129px;top:459.06px;font-size:18px;line-height:20px;transform:scaleX(0.988);transform-origin:0 0;">characteristics_comorbid_condition</div>
<svg class="a" style="left:1070px;top:490.1px" width="13" height="14" viewBox="0 0 13 14"><polygon points="0.5,0.5 12.5,7 0.5,13.5" fill="#b4b4b4"/></svg>
<svg class="a" style="left:1097px;top:488px" width="22" height="18" viewBox="0 0 22 18"><rect x="0" y="0" width="21.5" height="18" fill="#a9adb2"/><rect x="2" y="4.5" width="4.5" height="3" fill="#3e3f41"/><rect x="8" y="4.5" width="6" height="3" fill="#3e3f41"/><rect x="15.5" y="4.5" width="4.5" height="3" fill="#3e3f41"/><rect x="2" y="9" width="4.5" height="3" fill="#3e3f41"/><rect x="8" y="9" width="6" height="3" fill="#3e3f41"/><rect x="15.5" y="9" width="4.5" height="3" fill="#3e3f41"/><rect x="2" y="13.5" width="4.5" height="3" fill="#3e3f41"/><rect x="8" y="13.5" width="6" height="3" fill="#3e3f41"/><rect x="15.5" y="13.5" width="4.5" height="3" fill="#3e3f41"/></svg>
<div class="t" style="left:1129px;top:489.06px;font-size:18px;line-height:20px;transform:scaleX(0.968);transform-origin:0 0;">characteristics_occupation</div>
<svg class="a" style="left:1070px;top:520.1px" width="13" height="14" viewBox="0 0 13 14"><polygon points="0.5,0.5 12.5,7 0.5,13.5" fill="#b4b4b4"/></svg>
<svg class="a" style="left:1097px;top:518px" width="22" height="18" viewBox="0 0 22 18"><rect x="0" y="0" width="21.5" height="18" fill="#a9adb2"/><rect x="2" y="4.5" width="4.5" height="3" fill="#3e3f41"/><rect x="8" y="4.5" width="6" height="3" fill="#3e3f41"/><rect x="15.5" y="4.5" width="4.5" height="3" fill="#3e3f41"/><rect x="2" y="9" width="4.5" height="3" fill="#3e3f41"/><rect x="8" y="9" width="6" height="3" fill="#3e3f41"/><rect x="15.5" y="9" width="4.5" height="3" fill="#3e3f41"/><rect x="2" y="13.5" width="4.5" height="3" fill="#3e3f41"/><rect x="8" y="13.5" width="6" height="3" fill="#3e3f41"/><rect x="15.5" y="13.5" width="4.5" height="3" fill="#3e3f41"/></svg>
<div class="t" style="left:1129px;top:519.06px;font-size:18px;line-height:20px;transform:scaleX(0.947);transform-origin:0 0;">characteristics_onset_date_range</div>
<svg class="a" style="left:1070px;top:550.1px" width="13" height="14" viewBox="0 0 13 14"><polygon points="0.5,0.5 12.5,7 0.5,13.5" fill="#b4b4b4"/></svg>
<svg class="a" style="left:1097px;top:548px" width="22" height="18" viewBox="0 0 22 18"><rect x="0" y="0" width="21.5" height="18" fill="#a9adb2"/><rect x="2" y="4.5" width="4.5" height="3" fill="#3e3f41"/><rect x="8" y="4.5" width="6" height="3" fill="#3e3f41"/><rect x="15.5" y="4.5" width="4.5" height="3" fill="#3e3f41"/><rect x="2" y="9" width="4.5" height="3" fill="#3e3f41"/><rect x="8" y="9" width="6" height="3" fill="#3e3f41"/><rect x="15.5" y="9" width="4.5" height="3" fill="#3e3f41"/><rect x="2" y="13.5" width="4.5" height="3" fill="#3e3f41"/><rect x="8" y="13.5" width="6" height="3" fill="#3e3f41"/><rect x="15.5" y="13.5" width="4.5" height="3" fill="#3e3f41"/></svg>
<div class="t" style="left:1129px;top:549.06px;font-size:18px;line-height:20px;transform:scaleX(0.963);transform-origin:0 0;">characteristics_province</div>
<svg class="a" style="left:1070px;top:580.1px" width="13" height="14" viewBox="0 0 13 14"><polygon points="0.5,0.5 12.5,7 0.5,13.5" fill="#b4b4b4"/></svg>
<svg class="a" style="left:1097px;top:578px" width="22" height="18" viewBox="0 0 22 18"><rect x="0" y="0" width="21.5" height="18" fill="#a9adb2"/><rect x="2" y="4.5" width="4.5" height="3" fill="#3e3f41"/><rect x="8" y="4.5" width="6" height="3" fill="#3e3f41"/><rect x="15.5" y="4.5" width="4.5" height="3" fill="#3e3f41"/><rect x="2" y="9" width="4.5" height="3" fill="#3e3f41"/><rect x="8" y="9" width="6" height="3" fill="#3e3f41"/><rect x="15.5" y="9" width="4.5" height="3" fill="#3e3f41"/><rect x="2" y="13.5" width="4.5" height="3" fill="#3e3f41"/><rect x="8" y="13.5" width="6" height="3" fill="#3e3f41"/><rect x="15.5" y="13.5" width="4.5" height="3" fill="#3e3f41"/></svg>
<div class="t" style="left:1129px;top:579.06px;font-size:18px;line-height:20px;transform:scaleX(0.933);transform-origin:0 0;">characteristics_sex</div>
<svg class="a" style="left:1070px;top:610.1px" width="13" height="14" viewBox="0 0 13 14"><polygon points="0.5,0.5 12.5,7 0.5,13.5" fill="#b4b4b4"/></svg>
<svg class="a" style="left:1097px;top:608px" width="22" height="18" viewBox="0 0 22 18"><rect x="0" y="0" width="21.5" height="18" fill="#a9adb2"/><rect x="2" y="4.5" width="4.5" height="3" fill="#3e3f41"/><rect x="8" y="4.5" width="6" height="3" fill="#3e3f41"/><rect x="15.5" y="4.5" width="4.5" height="3" fill="#3e3f41"/><rect x="2" y="9" width="4.5" height="3" fill="#3e3f41"/><rect x="8" y="9" width="6" height="3" fill="#3e3f41"/><rect x="15.5" y="9" width="4.5" height="3" fill="#3e3f41"/><rect x="2" y="13.5" width="4.5" height="3" fill="#3e3f41"/><rect x="8" y="13.5" width="6" height="3" fill="#3e3f41"/><rect x="15.5" y="13.5" width="4.5" height="3" fill="#3e3f41"/></svg>
<div class="t" style="left:1129px;top:609.06px;font-size:18px;line-height:20px;transform:scaleX(0.951);transform-origin:0 0;">characteristics_wuhan_exposed</div>
<svg class="a" style="left:1070px;top:640.1px" width="13" height="14" viewBox="0 0 13 14"><polygon points="0.5,0.5 12.5,7 0.5,13.5" fill="#b4b4b4"/></svg>
<svg class="a" style="left:1097px;top:638px" width="22" height="18" viewBox="0 0 22 18"><rect x="0" y="0" width="21.5" height="18" fill="#a9adb2"/><rect x="2" y="4.5" width="4.5" height="3" fill="#3e3f41"/><rect x="8" y="4.5" width="6" height="3" fill="#3e3f41"/><rect x="15.5" y="4.5" width="4.5" height="3" fill="#3e3f41"/><rect x="2" y="9" width="4.5" height="3" fill="#3e3f41"/><rect x="8" y="9" width="6" height="3" fill="#3e3f41"/><rect x="15.5" y="9" width="4.5" height="3" fill="#3e3f41"/><rect x="2" y="13.5" width="4.5" height="3" fill="#3e3f41"/><rect x="8" y="13.5" width="6" height="3" fill="#3e3f41"/><rect x="15.5" y="13.5" width="4.5" height="3" fill="#3e3f41"/></svg>
<div class="t" style="left:1129px;top:639.06px;font-size:18px;line-height:20px;transform:scaleX(0.963);transform-origin:0 0;">places</div>
<svg class="a" style="left:1043px;top:669px" width="14" height="12" viewBox="0 0 14 12"><polygon points="0.5,0.5 13.5,0.5 7,11.5" fill="#b4b4b4"/></svg>
<svg class="a" style="left:1069px;top:668px" width="23" height="18" viewBox="0 0 23 18"><path d="M0,0 H8 L10,3 H22.5 V17.5 H0 Z" fill="#3c93ba"/></svg>
<div class="t" style="left:1102px;top:669.06px;font-size:18px;line-height:20px;transform:scaleX(0.972);transform-origin:0 0;">views</div>
<svg class="a" style="left:1070px;top:700.1px" width="13" height="14" viewBox="0 0 13 14"><polygon points="0.5,0.5 12.5,7 0.5,13.5" fill="#b4b4b4"/></svg>
<svg class="a" style="left:1097px;top:698px" width="23" height="22" viewBox="0 0 23 22"><rect x="0" y="0" width="21.7" height="4" fill="#a9adb2"/><rect x="0" y="0" width="1.9" height="18" fill="#a9adb2"/><rect x="0" y="7.3" width="6.5" height="1.7" fill="#a9adb2"/><rect x="0" y="11.8" width="6.5" height="1.7" fill="#a9adb2"/><rect x="0" y="16.3" width="8.5" height="1.7" fill="#a9adb2"/><rect x="5.8" y="4" width="1.5" height="14" fill="#a9adb2"/><rect x="19.9" y="0" width="1.8" height="9" fill="#a9adb2"/><circle cx="14.2" cy="12.4" r="4.5" fill="#3e3f41" stroke="#a9adb2" stroke-width="2"/><line x1="17.4" y1="15.6" x2="21.8" y2="20.3" stroke="#a9adb2" stroke-width="2.3"/></svg>
<div class="t" style="left:1129px;top:699.06px;font-size:18px;line-height:20px;transform:scaleX(0.922);transform-origin:0 0;">cases_by_age_range</div>
<svg class="a" style="left:1070px;top:730.1px" width="13" height="14" viewBox="0 0 13 14"><polygon points="0.5,0.5 12.5,7 0.5,13.5" fill="#b4b4b4"/></svg>
<svg class="a" style="left:1097px;top:728px" width="23" height="22" viewBox="0 0 23 22"><rect x="0" y="0" width="21.7" height="4" fill="#a9adb2"/><rect x="0" y="0" width="1.9" height="18" fill="#a9adb2"/><rect x="0" y="7.3" width="6.5" height="1.7" fill="#a9adb2"/><rect x="0" y="11.8" width="6.5" height="1.7" fill="#a9adb2"/><rect x="0" y="16.3" width="8.5" height="1.7" fill="#a9adb2"/><rect x="5.8" y="4" width="1.5" height="14" fill="#a9adb2"/><rect x="19.9" y="0" width="1.8" height="9" fill="#a9adb2"/><circle cx="14.2" cy="12.4" r="4.5" fill="#3e3f41" stroke="#a9adb2" stroke-width="2"/><line x1="17.4" y1="15.6" x2="21.8" y2="20.3" stroke="#a9adb2" stroke-width="2.3"/></svg>
<div class="t" style="left:1129px;top:729.06px;font-size:18px;line-height:20px;transform:scaleX(0.901);transform-origin:0 0;">cases_by_age_sex</div>
<svg class="a" style="left:1070px;top:760.1px" width="13" height="14" viewBox="0 0 13 14"><polygon points="0.5,0.5 12.5,7 0.5,13.5" fill="#b4b4b4"/></svg>
<svg class="a" style="left:1097px;top:758px" width="23" height="22" viewBox="0 0 23 22"><rect x="0" y="0" width="21.7" height="4" fill="#a9adb2"/><rect x="0" y="0" width="1.9" height="18" fill="#a9adb2"/><rect x="0" y="7.3" width="6.5" height="1.7" fill="#a9adb2"/><rect x="0" y="11.8" width="6.5" height="1.7" fill="#a9adb2"/><rect x="0" y="16.3" width="8.5" height="1.7" fill="#a9adb2"/><rect x="5.8" y="4" width="1.5" height="14" fill="#a9adb2"/><rect x="19.9" y="0" width="1.8" height="9" fill="#a9adb2"/><circle cx="14.2" cy="12.4" r="4.5" fill="#3e3f41" stroke="#a9adb2" stroke-width="2"/><line x1="17.4" y1="15.6" x2="21.8" y2="20.3" stroke="#a9adb2" stroke-width="2.3"/></svg>
<div class="t" style="left:1129px;top:759.06px;font-size:18px;line-height:20px;transform:scaleX(0.899);transform-origin:0 0;">cases_by_sex</div>
<svg class="a" style="left:1070px;top:790.1px" width="13" height="14" viewBox="0 0 13 14"><polygon points="0.5,0.5 12.5,7 0.5,13.5" fill="#b4b4b4"/></svg>
<svg class="a" style="left:1097px;top:788px" width="23" height="22" viewBox="0 0 23 22"><rect x="0" y="0" width="21.7" height="4" fill="#a9adb2"/><rect x="0" y="0" width="1.9" height="18" fill="#a9adb2"/><rect x="0" y="7.3" width="6.5" height="1.7" fill="#a9adb2"/><rect x="0" y="11.8" width="6.5" height="1.7" fill="#a9adb2"/><rect x="0" y="16.3" width="8.5" height="1.7" fill="#a9adb2"/><rect x="5.8" y="4" width="1.5" height="14" fill="#a9adb2"/><rect x="19.9" y="0" width="1.8" height="9" fill="#a9adb2"/><circle cx="14.2" cy="12.4" r="4.5" fill="#3e3f41" stroke="#a9adb2" stroke-width="2"/><line x1="17.4" y1="15.6" x2="21.8" y2="20.3" stroke="#a9adb2" stroke-width="2.3"/></svg>
<div class="t" style="left:1129px;top:789.06px;font-size:18px;line-height:20px;transform:scaleX(0.994);transform-origin:0 0;">current</div>
<svg class="a" style="left:1070px;top:820.1px" width="13" height="14" viewBox="0 0 13 14"><polygon points="0.5,0.5 12.5,7 0.5,13.5" fill="#b4b4b4"/></svg>
<svg class="a" style="left:1097px;top:818px" width="23" height="22" viewBox="0 0 23 22"><rect x="0" y="0" width="21.7" height="4" fill="#a9adb2"/><rect x="0" y="0" width="1.9" height="18" fill="#a9adb2"/><rect x="0" y="7.3" width="6.5" height="1.7" fill="#a9adb2"/><rect x="0" y="11.8" width="6.5" height="1.7" fill="#a9adb2"/><rect x="0" y="16.3" width="8.5" height="1.7" fill="#a9adb2"/><rect x="5.8" y="4" width="1.5" height="14" fill="#a9adb2"/><rect x="19.9" y="0" width="1.8" height="9" fill="#a9adb2"/><circle cx="14.2" cy="12.4" r="4.5" fill="#3e3f41" stroke="#a9adb2" stroke-width="2"/><line x1="17.4" y1="15.6" x2="21.8" y2="20.3" stroke="#a9adb2" stroke-width="2.3"/></svg>
<div class="t" style="left:1129px;top:819.06px;font-size:18px;line-height:20px;transform:scaleX(0.929);transform-origin:0 0;">current_cases</div>
<svg class="a" style="left:1070px;top:850.1px" width="13" height="14" viewBox="0 0 13 14"><polygon points="0.5,0.5 12.5,7 0.5,13.5" fill="#b4b4b4"/></svg>
<svg class="a" style="left:1097px;top:848px" width="23" height="22" viewBox="0 0 23 22"><rect x="0" y="0" width="21.7" height="4" fill="#a9adb2"/><rect x="0" y="0" width="1.9" height="18" fill="#a9adb2"/><rect x="0" y="7.3" width="6.5" height="1.7" fill="#a9adb2"/><rect x="0" y="11.8" width="6.5" height="1.7" fill="#a9adb2"/><rect x="0" y="16.3" width="8.5" height="1.7" fill="#a9adb2"/><rect x="5.8" y="4" width="1.5" height="14" fill="#a9adb2"/><rect x="19.9" y="0" width="1.8" height="9" fill="#a9adb2"/><circle cx="14.2" cy="12.4" r="4.5" fill="#3e3f41" stroke="#a9adb2" stroke-width="2"/><line x1="17.4" y1="15.6" x2="21.8" y2="20.3" stroke="#a9adb2" stroke-width="2.3"/></svg>
<div class="t" style="left:1129px;top:849.06px;font-size:18px;line-height:20px;transform:scaleX(0.968);transform-origin:0 0;">current_deaths</div>
<svg class="a" style="left:1070px;top:880.1px" width="13" height="14" viewBox="0 0 13 14"><polygon points="0.5,0.5 12.5,7 0.5,13.5" fill="#b4b4b4"/></svg>
<svg class="a" style="left:1097px;top:878px" width="23" height="22" viewBox="0 0 23 22"><rect x="0" y="0" width="21.7" height="4" fill="#a9adb2"/><rect x="0" y="0" width="1.9" height="18" fill="#a9adb2"/><rect x="0" y="7.3" width="6.5" height="1.7" fill="#a9adb2"/><rect x="0" y="11.8" width="6.5" height="1.7" fill="#a9adb2"/><rect x="0" y="16.3" width="8.5" height="1.7" fill="#a9adb2"/><rect x="5.8" y="4" width="1.5" height="14" fill="#a9adb2"/><rect x="19.9" y="0" width="1.8" height="9" fill="#a9adb2"/><circle cx="14.2" cy="12.4" r="4.5" fill="#3e3f41" stroke="#a9adb2" stroke-width="2"/><line x1="17.4" y1="15.6" x2="21.8" y2="20.3" stroke="#a9adb2" stroke-width="2.3"/></svg>
<div class="t" style="left:1129px;top:879.06px;font-size:18px;line-height:20px;transform:scaleX(0.969);transform-origin:0 0;">current_recovered</div>
<svg class="a" style="left:1070px;top:910.1px" width="13" height="14" viewBox="0 0 13 14"><polygon points="0.5,0.5 12.5,7 0.5,13.5" fill="#b4b4b4"/></svg>
<svg class="a" style="left:1097px;top:908px" width="23" height="22" viewBox="0 0 23 22"><rect x="0" y="0" width="21.7" height="4" fill="#a9adb2"/><rect x="0" y="0" width="1.9" height="18" fill="#a9adb2"/><rect x="0" y="7.3" width="6.5" height="1.7" fill="#a9adb2"/><rect x="0" y="11.8" width="6.5" height="1.7" fill="#a9adb2"/><rect x="0" y="16.3" width="8.5" height="1.7" fill="#a9adb2"/><rect x="5.8" y="4" width="1.5" height="14" fill="#a9adb2"/><rect x="19.9" y="0" width="1.8" height="9" fill="#a9adb2"/><circle cx="14.2" cy="12.4" r="4.5" fill="#3e3f41" stroke="#a9adb2" stroke-width="2"/><line x1="17.4" y1="15.6" x2="21.8" y2="20.3" stroke="#a9adb2" stroke-width="2.3"/></svg>
<div class="t" style="left:1129px;top:909.06px;font-size:18px;line-height:20px;transform:scaleX(0.948);transform-origin:0 0;">deaths_by_age_range</div>
<svg class="a" style="left:1070px;top:940.1px" width="13" height="14" viewBox="0 0 13 14"><polygon points="0.5,0.5 12.5,7 0.5,13.5" fill="#b4b4b4"/></svg>
<svg class="a" style="left:1097px;top:938px" width="23" height="22" viewBox="0 0 23 22"><rect x="0" y="0" width="21.7" height="4" fill="#a9adb2"/><rect x="0" y="0" width="1.9" height="18" fill="#a9adb2"/><rect x="0" y="7.3" width="6.5" height="1.7" fill="#a9adb2"/><rect x="0" y="11.8" width="6.5" height="1.7" fill="#a9adb2"/><rect x="0" y="16.3" width="8.5" height="1.7" fill="#a9adb2"/><rect x="5.8" y="4" width="1.5" height="14" fill="#a9adb2"/><rect x="19.9" y="0" width="1.8" height="9" fill="#a9adb2"/><circle cx="14.2" cy="12.4" r="4.5" fill="#3e3f41" stroke="#a9adb2" stroke-width="2"/><line x1="17.4" y1="15.6" x2="21.8" y2="20.3" stroke="#a9adb2" stroke-width="2.3"/></svg>
<div class="t" style="left:1129px;top:939.06px;font-size:18px;line-height:20px;transform:scaleX(0.926);transform-origin:0 0;">deaths_by_age_sex</div>
<svg class="a" style="left:1070px;top:970.1px" width="13" height="14" viewBox="0 0 13 14"><polygon points="0.5,0.5 12.5,7 0.5,13.5" fill="#b4b4b4"/></svg>
<svg class="a" style="left:1097px;top:968px" width="23" height="22" viewBox="0 0 23 22"><rect x="0" y="0" width="21.7" height="4" fill="#a9adb2"/><rect x="0" y="0" width="1.9" height="18" fill="#a9adb2"/><rect x="0" y="7.3" width="6.5" height="1.7" fill="#a9adb2"/><rect x="0" y="11.8" width="6.5" height="1.7" fill="#a9adb2"/><rect x="0" y="16.3" width="8.5" height="1.7" fill="#a9adb2"/><rect x="5.8" y="4" width="1.5" height="14" fill="#a9adb2"/><rect x="19.9" y="0" width="1.8" height="9" fill="#a9adb2"/><circle cx="14.2" cy="12.4" r="4.5" fill="#3e3f41" stroke="#a9adb2" stroke-width="2"/><line x1="17.4" y1="15.6" x2="21.8" y2="20.3" stroke="#a9adb2" stroke-width="2.3"/></svg>
<div class="t" style="left:1129px;top:969.06px;font-size:18px;line-height:20px;transform:scaleX(0.94);transform-origin:0 0;">deaths_by_sex</div>
<svg class="a" style="left:1070px;top:1000.1px" width="13" height="14" viewBox="0 0 13 14"><polygon points="0.5,0.5 12.5,7 0.5,13.5" fill="#b4b4b4"/></svg>
<svg class="a" style="left:1097px;top:998px" width="23" height="22" viewBox="0 0 23 22"><rect x="0" y="0" width="21.7" height="4" fill="#a9adb2"/><rect x="0" y="0" width="1.9" height="18" fill="#a9adb2"/><rect x="0" y="7.3" width="6.5" height="1.7" fill="#a9adb2"/><rect x="0" y="11.8" width="6.5" height="1.7" fill="#a9adb2"/><rect x="0" y="16.3" width="8.5" height="1.7" fill="#a9adb2"/><rect x="5.8" y="4" width="1.5" height="14" fill="#a9adb2"/><rect x="19.9" y="0" width="1.8" height="9" fill="#a9adb2"/><circle cx="14.2" cy="12.4" r="4.5" fill="#3e3f41" stroke="#a9adb2" stroke-width="2"/><line x1="17.4" y1="15.6" x2="21.8" y2="20.3" stroke="#a9adb2" stroke-width="2.3"/></svg>
<div class="t" style="left:1129px;top:999.06px;font-size:18px;line-height:20px;transform:scaleX(0.959);transform-origin:0 0;">mortality_rate_by_age_range</div>
<svg class="a" style="left:1070px;top:1030.1px" width="13" height="14" viewBox="0 0 13 14"><polygon points="0.5,0.5 12.5,7 0.5,13.5" fill="#b4b4b4"/></svg>
<svg class="a" style="left:1097px;top:1028px" width="23" height="22" viewBox="0 0 23 22"><rect x="0" y="0" width="21.7" height="4" fill="#a9adb2"/><rect x="0" y="0" width="1.9" height="18" fill="#a9adb2"/><rect x="0" y="7.3" width="6.5" height="1.7" fill="#a9adb2"/><rect x="0" y="11.8" width="6.5" height="1.7" fill="#a9adb2"/><rect x="0" y="16.3" width="8.5" height="1.7" fill="#a9adb2"/><rect x="5.8" y="4" width="1.5" height="14" fill="#a9adb2"/><rect x="19.9" y="0" width="1.8" height="9" fill="#a9adb2"/><circle cx="14.2" cy="12.4" r="4.5" fill="#3e3f41" stroke="#a9adb2" stroke-width="2"/><line x1="17.4" y1="15.6" x2="21.8" y2="20.3" stroke="#a9adb2" stroke-width="2.3"/></svg>
<div class="t" style="left:1129px;top:1029.06px;font-size:18px;line-height:20px;transform:scaleX(0.948);transform-origin:0 0;">mortality_rate_by_age_sex</div>
<svg class="a" style="left:1070px;top:1060.1px" width="13" height="14" viewBox="0 0 13 14"><polygon points="0.5,0.5 12.5,7 0.5,13.5" fill="#b4b4b4"/></svg>
<svg class="a" style="left:1097px;top:1058px" width="23" height="22" viewBox="0 0 23 22"><rect x="0" y="0" width="21.7" height="4" fill="#a9adb2"/><rect x="0" y="0" width="1.9" height="18" fill="#a9adb2"/><rect x="0" y="7.3" width="6.5" height="1.7" fill="#a9adb2"/><rect x="0" y="11.8" width="6.5" height="1.7" fill="#a9adb2"/><rect x="0" y="16.3" width="8.5" height="1.7" fill="#a9adb2"/><rect x="5.8" y="4" width="1.5" height="14" fill="#a9adb2"/><rect x="19.9" y="0" width="1.8" height="9" fill="#a9adb2"/><circle cx="14.2" cy="12.4" r="4.5" fill="#3e3f41" stroke="#a9adb2" stroke-width="2"/><line x1="17.4" y1="15.6" x2="21.8" y2="20.3" stroke="#a9adb2" stroke-width="2.3"/></svg>
<div class="t" style="left:1129px;top:1059.06px;font-size:18px;line-height:20px;transform:scaleX(0.961);transform-origin:0 0;">mortality_rate_by_sex</div>
<svg class="a" style="left:1070px;top:1090.1px" width="13" height="14" viewBox="0 0 13 14"><polygon points="0.5,0.5 12.5,7 0.5,13.5" fill="#b4b4b4"/></svg>
<svg class="a" style="left:1097px;top:1088px" width="23" height="22" viewBox="0 0 23 22"><rect x="0" y="0" width="21.7" height="4" fill="#a9adb2"/><rect x="0" y="0" width="1.9" height="18" fill="#a9adb2"/><rect x="0" y="7.3" width="6.5" height="1.7" fill="#a9adb2"/><rect x="0" y="11.8" width="6.5" height="1.7" fill="#a9adb2"/><rect x="0" y="16.3" width="8.5" height="1.7" fill="#a9adb2"/><rect x="5.8" y="4" width="1.5" height="14" fill="#a9adb2"/><rect x="19.9" y="0" width="1.8" height="9" fill="#a9adb2"/><circle cx="14.2" cy="12.4" r="4.5" fill="#3e3f41" stroke="#a9adb2" stroke-width="2"/><line x1="17.4" y1="15.6" x2="21.8" y2="20.3" stroke="#a9adb2" stroke-width="2.3"/></svg>
<div class="t" style="left:1129px;top:1089.06px;font-size:18px;line-height:20px;transform:scaleX(0.997);transform-origin:0 0;">mortality_rates</div>
<svg class="a" style="left:1070px;top:1120.1px" width="13" height="14" viewBox="0 0 13 14"><polygon points="0.5,0.5 12.5,7 0.5,13.5" fill="#b4b4b4"/></svg>
<svg class="a" style="left:1097px;top:1118px" width="23" height="22" viewBox="0 0 23 22"><rect x="0" y="0" width="21.7" height="4" fill="#a9adb2"/><rect x="0" y="0" width="1.9" height="18" fill="#a9adb2"/><rect x="0" y="7.3" width="6.5" height="1.7" fill="#a9adb2"/><rect x="0" y="11.8" width="6.5" height="1.7" fill="#a9adb2"/><rect x="0" y="16.3" width="8.5" height="1.7" fill="#a9adb2"/><rect x="5.8" y="4" width="1.5" height="14" fill="#a9adb2"/><rect x="19.9" y="0" width="1.8" height="9" fill="#a9adb2"/><circle cx="14.2" cy="12.4" r="4.5" fill="#3e3f41" stroke="#a9adb2" stroke-width="2"/><line x1="17.4" y1="15.6" x2="21.8" y2="20.3" stroke="#a9adb2" stroke-width="2.3"/></svg>
<div class="t" style="left:1129px;top:1119.06px;font-size:18px;line-height:20px;transform:scaleX(0.948);transform-origin:0 0;">time_series</div>
<svg class="a" style="left:1016px;top:1150.1px" width="13" height="14" viewBox="0 0 13 14"><polygon points="0.5,0.5 12.5,7 0.5,13.5" fill="#b4b4b4"/></svg>
<svg class="a" style="left:1042px;top:1146px" width="22" height="20" viewBox="0 0 22 20"><rect x="14" y="0" width="7.3" height="8" fill="#3c93ba"/><rect x="0.4" y="9.5" width="10.6" height="10.4" fill="#3c93ba"/><rect x="14" y="12" width="7.3" height="7.9" fill="#3c93ba"/><path d="M5.1,9.5 V3.7 H14" stroke="#c8cdd0" stroke-width="1.6" fill="none"/><path d="M11,16.4 H14" stroke="#c8cdd0" stroke-width="1.4" fill="none"/></svg>
<div class="t" style="left:1075px;top:1149.06px;font-size:18px;line-height:20px;transform:scaleX(0.952);transform-origin:0 0;">corona_virus_state_action</div>
<svg class="a" style="left:1016px;top:1180.1px" width="13" height="14" viewBox="0 0 13 14"><polygon points="0.5,0.5 12.5,7 0.5,13.5" fill="#b4b4b4"/></svg>
<svg class="a" style="left:1042px;top:1176px" width="22" height="20" viewBox="0 0 22 20"><rect x="14" y="0" width="7.3" height="8" fill="#3c93ba"/><rect x="0.4" y="9.5" width="10.6" height="10.4" fill="#3c93ba"/><rect x="14" y="12" width="7.3" height="7.9" fill="#3c93ba"/><path d="M5.1,9.5 V3.7 H14" stroke="#c8cdd0" stroke-width="1.6" fill="none"/><path d="M11,16.4 H14" stroke="#c8cdd0" stroke-width="1.4" fill="none"/></svg>
<div class="t" style="left:1075px;top:1179.06px;font-size:18px;line-height:20px;transform:scaleX(0.992);transform-origin:0 0;">dolt_sql_performance</div>
<svg class="a" style="left:1016px;top:1210.1px" width="13" height="14" viewBox="0 0 13 14"><polygon points="0.5,0.5 12.5,7 0.5,13.5" fill="#b4b4b4"/></svg>
<svg class="a" style="left:1042px;top:1206px" width="22" height="20" viewBox="0 0 22 20"><rect x="14" y="0" width="7.3" height="8" fill="#3c93ba"/><rect x="0.4" y="9.5" width="10.6" height="10.4" fill="#3c93ba"/><rect x="14" y="12" width="7.3" height="7.9" fill="#3c93ba"/><path d="M5.1,9.5 V3.7 H14" stroke="#c8cdd0" stroke-width="1.6" fill="none"/><path d="M11,16.4 H14" stroke="#c8cdd0" stroke-width="1.4" fill="none"/></svg>
<div class="t" style="left:1075px;top:1209.06px;font-size:18px;line-height:20px;transform:scaleX(0.984);transform-origin:0 0;">dolt_sqllogictest_results</div>
<svg class="a" style="left:1016px;top:1240.1px" width="13" height="14" viewBox="0 0 13 14"><polygon points="0.5,0.5 12.5,7 0.5,13.5" fill="#b4b4b4"/></svg>
<svg class="a" style="left:1042px;top:1236px" width="22" height="20" viewBox="0 0 22 20"><rect x="14" y="0" width="7.3" height="8" fill="#3c93ba"/><rect x="0.4" y="9.5" width="10.6" height="10.4" fill="#3c93ba"/><rect x="14" y="12" width="7.3" height="7.9" fill="#3c93ba"/><path d="M5.1,9.5 V3.7 H14" stroke="#c8cdd0" stroke-width="1.6" fill="none"/><path d="M11,16.4 H14" stroke="#c8cdd0" stroke-width="1.4" fill="none"/></svg>
<div class="t" style="left:1075px;top:1239.06px;font-size:18px;line-height:20px;transform:scaleX(0.971);transform-origin:0 0;">image_net</div>
<svg class="a" style="left:1016px;top:1270.1px" width="13" height="14" viewBox="0 0 13 14"><polygon points="0.5,0.5 12.5,7 0.5,13.5" fill="#b4b4b4"/></svg>
<svg class="a" style="left:1042px;top:1266px" width="22" height="20" viewBox="0 0 22 20"><rect x="14" y="0" width="7.3" height="8" fill="#3c93ba"/><rect x="0.4" y="9.5" width="10.6" height="10.4" fill="#3c93ba"/><rect x="14" y="12" width="7.3" height="7.9" fill="#3c93ba"/><path d="M5.1,9.5 V3.7 H14" stroke="#c8cdd0" stroke-width="1.6" fill="none"/><path d="M11,16.4 H14" stroke="#c8cdd0" stroke-width="1.4" fill="none"/></svg>
<div class="t" style="left:1075px;top:1269.06px;font-size:18px;line-height:20px;transform:scaleX(0.992);transform-origin:0 0;">information_schema</div>
<svg class="a" style="left:1016px;top:1300.1px" width="13" height="14" viewBox="0 0 13 14"><polygon points="0.5,0.5 12.5,7 0.5,13.5" fill="#b4b4b4"/></svg>
<svg class="a" style="left:1042px;top:1296px" width="22" height="20" viewBox="0 0 22 20"><rect x="14" y="0" width="7.3" height="8" fill="#3c93ba"/><rect x="0.4" y="9.5" width="10.6" height="10.4" fill="#3c93ba"/><rect x="14" y="12" width="7.3" height="7.9" fill="#3c93ba"/><path d="M5.1,9.5 V3.7 H14" stroke="#c8cdd0" stroke-width="1.6" fill="none"/><path d="M11,16.4 H14" stroke="#c8cdd0" stroke-width="1.4" fill="none"/></svg>
<div class="t" style="left:1075px;top:1299.06px;font-size:18px;line-height:20px;transform:scaleX(1.023);transform-origin:0 0;">sqllogictest</div>
<svg class="a" style="left:1016px;top:1330.1px" width="13" height="14" viewBox="0 0 13 14"><polygon points="0.5,0.5 12.5,7 0.5,13.5" fill="#b4b4b4"/></svg>
<svg class="a" style="left:1042px;top:1326px" width="22" height="20" viewBox="0 0 22 20"><rect x="14" y="0" width="7.3" height="8" fill="#3c93ba"/><rect x="0.4" y="9.5" width="10.6" height="10.4" fill="#3c93ba"/><rect x="14" y="12" width="7.3" height="7.9" fill="#3c93ba"/><path d="M5.1,9.5 V3.7 H14" stroke="#c8cdd0" stroke-width="1.6" fill="none"/><path d="M11,16.4 H14" stroke="#c8cdd0" stroke-width="1.4" fill="none"/></svg>
<div class="t" style="left:1075px;top:1329.06px;font-size:18px;line-height:20px;transform:scaleX(1.011);transform-origin:0 0;">test</div>
<svg class="a" style="left:1016px;top:1360.1px" width="13" height="14" viewBox="0 0 13 14"><polygon points="0.5,0.5 12.5,7 0.5,13.5" fill="#b4b4b4"/></svg>
<svg class="a" style="left:1042px;top:1356px" width="22" height="20" viewBox="0 0 22 20"><rect x="14" y="0" width="7.3" height="8" fill="#3c93ba"/><rect x="0.4" y="9.5" width="10.6" height="10.4" fill="#3c93ba"/><rect x="14" y="12" width="7.3" height="7.9" fill="#3c93ba"/><path d="M5.1,9.5 V3.7 H14" stroke="#c8cdd0" stroke-width="1.6" fill="none"/><path d="M11,16.4 H14" stroke="#c8cdd0" stroke-width="1.4" fill="none"/></svg>
<div class="t" style="left:1131px;top:99.76px;font-size:16px;line-height:20px;color:#808080;transform:scaleX(1.07);transform-origin:0 0;">272</div>
<div class="t" style="left:1125px;top:159.76px;font-size:16px;line-height:20px;color:#808080;transform:scaleX(1.07);transform-origin:0 0;">13</div>
<div class="t" style="left:1157px;top:309.76px;font-size:16px;line-height:20px;color:#808080;transform:scaleX(1.07);transform-origin:0 0;">11</div>
<div class="t" style="left:1154px;top:669.76px;font-size:16px;line-height:20px;color:#808080;transform:scaleX(1.07);transform-origin:0 0;">15</div>
<div class="a" style="left:1145px;top:125px;width:24px;height:24px;border:2px solid #34495f;border-radius:5px"></div>
<div class="t" style="left:1150px;top:129.89px;font-size:15.6px;line-height:20px;">13</div>
<div class="a" style="left:1474px;top:362px;width:12px;height:939px;background:#5a5b5d;"></div>
<div class="a" style="left:28px;top:1362px;width:1459px;height:3px;background:#2e2f31;"></div>
<div class="a" style="left:28px;top:1365px;width:1459px;height:28px;background:#3d3f41;"></div>
<div class="t" style="left:37px;top:1375.11px;font-size:17px;line-height:20px;">Services</div>
<svg class="a" style="left:1369px;top:1372px" width="22" height="22" viewBox="0 0 22 22"><circle cx="11" cy="11" r="9.6" fill="none" stroke="#c9cdd1" stroke-width="2.4"/><path d="M11,2 V8 M11,14 V20 M2,11 H8 M14,11 H20" stroke="#c9cdd1" stroke-width="2.8"/></svg>
<div class="a" style="left:1405px;top:1370px;width:1px;height:22px;background:#4a4c4e;"></div>
<svg class="a" style="left:1420px;top:1374px" width="19" height="20" viewBox="0 0 19 20"><circle cx="9.5" cy="10" r="7.2" fill="#c3c6c9"/><rect x="7" y="0" width="5" height="20" rx="1.2" fill="#c3c6c9" transform="rotate(0 9.5 10)"/><rect x="7" y="0" width="5" height="20" rx="1.2" fill="#c3c6c9" transform="rotate(60 9.5 10)"/><rect x="7" y="0" width="5" height="20" rx="1.2" fill="#c3c6c9" transform="rotate(120 9.5 10)"/><circle cx="9.5" cy="10" r="3.2" fill="#3d3f41"/></svg>
<div class="a" style="left:1459px;top:1382px;width:18px;height:4px;background:#c3c6c9;"></div>
<div class="t" style="left:-19px;top:43px;width:66px;height:20px;font-size:15.5px;line-height:20px;transform:rotate(-90deg);text-align:center;color:#bbbbbb">1: Project</div>
<div class="a" style="left:20px;top:76px;width:1.2px;height:9px;background:#bbbbbb;"></div>
<svg class="a" style="left:3px;top:94px" width="18" height="15" viewBox="0 0 18 15"><path d="M0,0 H6.5 L8.5,2.5 H17 V14.5 H0 Z" fill="#b9bbbd"/></svg>
<div class="t" style="left:-9px;top:151px;width:46px;height:20px;font-size:16px;line-height:20px;transform:rotate(-90deg);text-align:center;color:#bbbbbb">Learn</div>
<svg class="a" style="left:3px;top:187px" width="19" height="17" viewBox="0 0 19 17"><path d="M9.5,0.5 L18.5,5 L9.5,9.5 L0.5,5 Z" fill="#b9bbbd"/><path d="M3.5,8 V12.5 L9.5,15.5 L15.5,12.5 V8 L9.5,11 Z" fill="#b9bbbd"/></svg>
<svg class="a" style="left:1495px;top:22px" width="18" height="19" viewBox="0 0 18 19"><ellipse cx="9" cy="3.3" rx="8.5" ry="3.2" fill="#c3c6c9"/><path d="M0.5,5.5 Q9,10 17.5,5.5 V8.5 Q9,13 0.5,8.5 Z" fill="#c3c6c9"/><path d="M0.5,10.5 Q9,15 17.5,10.5 V13.5 Q9,18 0.5,13.5 Z" fill="#c3c6c9"/><path d="M0.5,15 Q9,19.5 17.5,15 V16 Q9,20 0.5,16 Z" fill="#c3c6c9"/></svg>
<div class="t" style="left:1471px;top:71px;width:64px;height:20px;font-size:15.4px;line-height:20px;transform:rotate(90deg);text-align:center;color:#e6e6e6">Database</div>
<div class="t" style="left:967px;top:18.76px;font-size:18px;line-height:20px;color:#c8ccd0;">Database</div>
<svg class="a" style="left:1330px;top:17px" width="22" height="22" viewBox="0 0 22 22"><circle cx="11" cy="11" r="9.6" fill="none" stroke="#c9cdd1" stroke-width="2.4"/><path d="M11,2 V8 M11,14 V20 M2,11 H8 M14,11 H20" stroke="#c9cdd1" stroke-width="2.8"/></svg>
<svg class="a" style="left:1370px;top:18px" width="19" height="19" viewBox="0 0 19 19"><path d="M2.5,0.5 H16.5 L9.5,7 Z M2.5,18.5 H16.5 L9.5,12 Z" fill="#c3c9d0"/><rect x="0" y="8" width="19" height="3.2" fill="#c3c9d0"/></svg>
<div class="a" style="left:1404px;top:12px;width:1px;height:30px;background:#5a6270;"></div>
<svg class="a" style="left:1420px;top:18px" width="19" height="20" viewBox="0 0 19 20"><circle cx="9.5" cy="10" r="7.2" fill="#c3c6c9"/><rect x="7" y="0" width="5" height="20" rx="1.2" fill="#c3c6c9" transform="rotate(0 9.5 10)"/><rect x="7" y="0" width="5" height="20" rx="1.2" fill="#c3c6c9" transform="rotate(60 9.5 10)"/><rect x="7" y="0" width="5" height="20" rx="1.2" fill="#c3c6c9" transform="rotate(120 9.5 10)"/><circle cx="9.5" cy="10" r="3.2" fill="#3d4654"/></svg>
<div class="a" style="left:1459px;top:26px;width:18px;height:4px;background:#c3c9d0;"></div>
<svg class="a" style="left:973px;top:61px" width="22" height="23" viewBox="0 0 22 23"><rect x="6.3" y="1.4" width="3.5" height="15.3" fill="#c4c5c7"/><rect x="0.2" y="7.3" width="15.5" height="3.2" fill="#c4c5c7"/><polygon points="12,17 21,17 16.5,22" fill="#c4c5c7"/></svg>
<svg class="a" style="left:1011px;top:59px" width="19" height="21" viewBox="0 0 19 21"><path d="M0,0.4 H14 V3.2 H3 V15.5 H0 Z" fill="#c4c5c7"/><rect x="4.2" y="4.6" width="14.2" height="15.4" fill="#c4c5c7"/><path d="M7.6,8.8 H15 M7.6,11.7 H15 M7.6,14.7 H15" stroke="#3d3f41" stroke-width="1.5"/></svg>
<div class="a" style="left:1045px;top:54px;width:1px;height:30px;background:#55585a;"></div>
<svg class="a" style="left:1059px;top:60px" width="20" height="20" viewBox="0 0 20 20"><path d="M3,9 A7,7 0 0 1 16.5,8.5" stroke="#c4c5c7" stroke-width="2.6" fill="none"/><polygon points="1,1 1,10 8.5,10" fill="#c4c5c7"/><path d="M17,11 A7,7 0 0 1 3.5,11.5" stroke="#c4c5c7" stroke-width="2.6" fill="none"/><polygon points="19,19 19,10 11.5,10" fill="#c4c5c7"/></svg>
<svg class="a" style="left:1096px;top:58px" width="25" height="25" viewBox="0 0 25 25"><ellipse cx="9.5" cy="3.8" rx="8.3" ry="2.6" fill="#c4c5c7"/><path d="M1.2,6.2 Q9.5,9.5 17.8,6.2 V8.6 Q9.5,11.8 1.2,8.6 Z" fill="#c4c5c7"/><path d="M1.2,10.4 Q8,13 13.5,11.5 L11.5,14.2 Q6,15.5 1.2,12.8 Z" fill="#c4c5c7"/><path d="M1.8,14.6 Q5.5,16.3 9.5,16 L8,18.2 Q4.5,18.2 2.2,17 Z" fill="#c4c5c7"/><path d="M10,22 L18,13.5" stroke="#c4c5c7" stroke-width="3.4" stroke-linecap="round"/><circle cx="19" cy="12" r="5" fill="#c4c5c7"/><path d="M19,5.5 L25,7.5 L20.5,12 Z" fill="#3c3f41"/></svg>
<div class="a" style="left:1140px;top:62px;width:15px;height:15px;background:#545658;"></div>
<div class="a" style="left:1171px;top:54px;width:1px;height:30px;background:#55585a;"></div>
<svg class="a" style="left:1186px;top:60px" width="22" height="18" viewBox="0 0 22 18"><rect x="0" y="0" width="21.5" height="18" fill="#5d5f61"/><rect x="2" y="4.5" width="4.5" height="3" fill="#3c3f41"/><rect x="8" y="4.5" width="6" height="3" fill="#3c3f41"/><rect x="15.5" y="4.5" width="4.5" height="3" fill="#3c3f41"/><rect x="2" y="9" width="4.5" height="3" fill="#3c3f41"/><rect x="8" y="9" width="6" height="3" fill="#3c3f41"/><rect x="15.5" y="9" width="4.5" height="3" fill="#3c3f41"/><rect x="2" y="13.5" width="4.5" height="3" fill="#3c3f41"/><rect x="8" y="13.5" width="6" height="3" fill="#3c3f41"/><rect x="15.5" y="13.5" width="4.5" height="3" fill="#3c3f41"/></svg>
<svg class="a" style="left:1225px;top:59px" width="22" height="22" viewBox="0 0 22 22"><path d="M3,13.5 L12.5,4 L16.5,8 L7,17.5 H3 Z" fill="#c4c5c7"/><path d="M14,2.5 A2.6,2.6 0 0 1 18,6.5 L17.5,7 L13.5,3 Z" fill="#c4c5c7"/><rect x="0.5" y="18" width="21.5" height="3.6" fill="#c4c5c7"/></svg>
<svg class="a" style="left:1264px;top:61px" width="22" height="20" viewBox="0 0 22 20"><rect x="1" y="1" width="19.5" height="18" fill="none" stroke="#c4c5c7" stroke-width="2"/><rect x="0" y="0" width="21.5" height="4.8" fill="#c4c5c7"/><text x="10.8" y="15.3" font-family="Liberation Sans" font-size="9.8" font-weight="bold" fill="#c4c5c7" text-anchor="middle">QL</text></svg>
<div class="a" style="left:1300px;top:54px;width:1px;height:30px;background:#55585a;"></div>
<svg class="a" style="left:1315px;top:60px" width="18" height="19" viewBox="0 0 18 19"><path d="M0,0 H18 L11.5,8 V19 H6.5 V8 Z" fill="#c4c5c7"/></svg>
<div class="a" style="left:28px;top:8px;width:166px;height:38px;background:#404244;"></div>
<svg class="a" style="left:28px;top:17px" width="22" height="22" viewBox="0 0 22 22"><path d="M0,4 Q3,1 6,3 Q7,9 7,15 Q6,20 0,20 Z" fill="#7bbde6"/><circle cx="1.5" cy="7" r="1.8" fill="#fff"/><circle cx="2" cy="7" r="0.8" fill="#000"/><polygon points="3,11 8,13 3,17" fill="#e7793b"/><polygon points="8,10 12.5,13.5 8,17" fill="#59a869"/></svg>
<div class="t" style="left:45px;top:18.76px;font-size:18px;line-height:20px;">engine_test.go</div>
<svg class="a" style="left:171px;top:21px" width="12" height="12" viewBox="0 0 12 12"><path d="M1,1 L11,11 M11,1 L1,11" stroke="#6e7072" stroke-width="1.4"/></svg>
<svg class="a" style="left:209px;top:17px" width="17" height="23" viewBox="0 0 17 23"><circle cx="2.3" cy="3" r="1.7" fill="#7bbde6"/><circle cx="13.7" cy="3" r="1.7" fill="#7bbde6"/><path d="M1.5,6 Q1.5,0.8 8,0.8 Q14.5,0.8 14.5,6 Q15,11 14.8,15.5 Q14.3,21.5 8,21.5 Q1.7,21.5 1.2,15.5 Q1,11 1.5,6 Z" fill="#7bbde6"/><circle cx="0.8" cy="11.5" r="0.9" fill="#c9d6dc"/><circle cx="15.2" cy="11.5" r="0.9" fill="#c9d6dc"/><circle cx="3" cy="20.5" r="1" fill="#c9d6dc"/><circle cx="13" cy="20.5" r="1" fill="#c9d6dc"/><circle cx="5.4" cy="6.4" r="2.6" fill="#fff"/><circle cx="10.8" cy="6.4" r="2.6" fill="#fff"/><circle cx="5.6" cy="6.5" r="1.05" fill="#000"/><circle cx="10.5" cy="6.5" r="1.05" fill="#000"/><ellipse cx="8" cy="9" rx="1.3" ry="0.9" fill="#3a4650"/><rect x="7.3" y="9.8" width="1.5" height="1.3" fill="#f0f0f0"/></svg>
<div class="t" style="left:235px;top:18.76px;font-size:18px;line-height:20px;">information_schema.go</div>
<svg class="a" style="left:432px;top:21px" width="12" height="12" viewBox="0 0 12 12"><path d="M1,1 L11,11 M11,1 L1,11" stroke="#6e7072" stroke-width="1.4"/></svg>
<div class="a" style="left:454px;top:8px;width:351px;height:36px;background:#4e5254;"></div>
<div class="a" style="left:454px;top:44px;width:351px;height:3px;background:#747a7e;"></div>
<svg class="a" style="left:468px;top:19px" width="22" height="18" viewBox="0 0 22 18"><rect x="0" y="0" width="21.5" height="18" fill="#b1b5b9"/><rect x="2" y="4.5" width="4.5" height="3" fill="#4e5254"/><rect x="8" y="4.5" width="6" height="3" fill="#4e5254"/><rect x="15.5" y="4.5" width="4.5" height="3" fill="#4e5254"/><rect x="2" y="9" width="4.5" height="3" fill="#4e5254"/><rect x="8" y="9" width="6" height="3" fill="#4e5254"/><rect x="15.5" y="9" width="4.5" height="3" fill="#4e5254"/><rect x="2" y="13.5" width="4.5" height="3" fill="#4e5254"/><rect x="8" y="13.5" width="6" height="3" fill="#4e5254"/><rect x="15.5" y="13.5" width="4.5" height="3" fill="#4e5254"/></svg>
<div class="t" style="left:496px;top:18.95px;font-size:17.45px;line-height:20px;">corona_virus.cases [dolt sql-server]</div>
<svg class="a" style="left:781px;top:21px" width="12" height="12" viewBox="0 0 12 12"><path d="M1,1 L11,11 M11,1 L1,11" stroke="#7a7c7e" stroke-width="1.4"/></svg>
<svg class="a" style="left:820px;top:17px" width="17" height="23" viewBox="0 0 17 23"><circle cx="2.3" cy="3" r="1.7" fill="#7bbde6"/><circle cx="13.7" cy="3" r="1.7" fill="#7bbde6"/><path d="M1.5,6 Q1.5,0.8 8,0.8 Q14.5,0.8 14.5,6 Q15,11 14.8,15.5 Q14.3,21.5 8,21.5 Q1.7,21.5 1.2,15.5 Q1,11 1.5,6 Z" fill="#7bbde6"/><circle cx="0.8" cy="11.5" r="0.9" fill="#c9d6dc"/><circle cx="15.2" cy="11.5" r="0.9" fill="#c9d6dc"/><circle cx="3" cy="20.5" r="1" fill="#c9d6dc"/><circle cx="13" cy="20.5" r="1" fill="#c9d6dc"/><circle cx="5.4" cy="6.4" r="2.6" fill="#fff"/><circle cx="10.8" cy="6.4" r="2.6" fill="#fff"/><circle cx="5.6" cy="6.5" r="1.05" fill="#000"/><circle cx="10.5" cy="6.5" r="1.05" fill="#000"/><ellipse cx="8" cy="9" rx="1.3" ry="0.9" fill="#3a4650"/><rect x="7.3" y="9.8" width="1.5" height="1.3" fill="#f0f0f0"/></svg>
<div class="t" style="left:846px;top:18.76px;font-size:18px;line-height:20px;">main.go</div>
<svg class="a" style="left:929px;top:22px" width="15" height="9" viewBox="0 0 15 9"><path d="M1,1 L7.5,7.5 L14,1" stroke="#c3c6c9" stroke-width="2" fill="none"/></svg>
<svg class="a" style="left:41px;top:59px" width="16" height="16" viewBox="0 0 16 16"><rect x="0.5" y="0" width="2" height="16" fill="#5e6062"/><path d="M13,1 L6,8 L13,15" stroke="#5e6062" stroke-width="2.2" fill="none"/></svg>
<svg class="a" style="left:82px;top:59px" width="11" height="16" viewBox="0 0 11 16"><path d="M9.5,1 L2.5,8 L9.5,15" stroke="#5e6062" stroke-width="2.2" fill="none"/></svg>
<div class="t" style="left:116px;top:59.18px;font-size:16.8px;line-height:20px;">1-500</div>
<svg class="a" style="left:165px;top:63px" width="12" height="8" viewBox="0 0 12 8"><path d="M1,1 L6,6 L11,1" stroke="#6e7072" stroke-width="1.8" fill="none"/></svg>
<div class="t" style="left:189px;top:59.18px;font-size:16.8px;line-height:20px;">of 501+</div>
<svg class="a" style="left:265px;top:59px" width="11" height="16" viewBox="0 0 11 16"><path d="M1.5,1 L8.5,8 L1.5,15" stroke="#c4c5c7" stroke-width="2.2" fill="none"/></svg>
<svg class="a" style="left:301px;top:59px" width="16" height="16" viewBox="0 0 16 16"><path d="M1.5,1 L8.5,8 L1.5,15" stroke="#c4c5c7" stroke-width="2.2" fill="none"/><rect x="13.5" y="0" width="2.2" height="16" fill="#c4c5c7"/></svg>
<div class="a" style="left:335px;top:52px;width:1px;height:28px;background:#55585a;"></div>
<svg class="a" style="left:375px;top:62px" width="13" height="9" viewBox="0 0 13 9"><path d="M1,1 L4.5,4.5 L1,8 M7,1 L10.5,4.5 L7,8" stroke="#c4c5c7" stroke-width="1.3" fill="none"/></svg>
<div class="t" style="left:403px;top:59.46px;font-size:16px;line-height:20px;transform:scaleX(0.955);transform-origin:0 0;">Comma-...d (CSV)</div>
<svg class="a" style="left:544px;top:63px" width="12" height="8" viewBox="0 0 12 8"><path d="M1,1 L6,6 L11,1" stroke="#6e7072" stroke-width="1.8" fill="none"/></svg>
<div class="a" style="left:571px;top:52px;width:1px;height:28px;background:#55585a;"></div>
<svg class="a" style="left:586px;top:57px" width="18" height="19" viewBox="0 0 18 19"><rect x="7.6" y="0" width="2.8" height="9" fill="#c4c5c7"/><polygon points="3,8 15,8 9,14" fill="#c4c5c7"/><rect x="0" y="15.5" width="18" height="3" fill="#c4c5c7"/></svg>
<svg class="a" style="left:625px;top:57px" width="18" height="19" viewBox="0 0 18 19"><rect x="0" y="0" width="18" height="3" fill="#c4c5c7"/><polygon points="3,10.5 15,10.5 9,4.5" fill="#c4c5c7"/><rect x="7.6" y="10" width="2.8" height="9" fill="#c4c5c7"/></svg>
<div class="a" style="left:658px;top:52px;width:1px;height:28px;background:#55585a;"></div>
<svg class="a" style="left:676px;top:58px" width="25" height="21" viewBox="0 0 25 21"><path d="M4.5,3.5 V14.5 Q1,14 1,9 Q1,4 4.5,3.5 Z" fill="#9da3a9"/><path d="M9,1 H15 V17 H9 Q6,17 6,14 V4 Q6,1 9,1 Z" fill="#9da3a9"/><rect x="16" y="3" width="7" height="3" fill="#9da3a9"/><rect x="16" y="12" width="7" height="3" fill="#9da3a9"/><circle cx="21.2" cy="17.3" r="3.2" fill="#1ee81e"/></svg>
<div class="t" style="left:703px;top:59.73px;font-size:15.2px;line-height:20px;">corona_virus.cases</div>
<svg class="a" style="left:849px;top:63px" width="12" height="8" viewBox="0 0 12 8"><path d="M1,1 L6,6 L11,1" stroke="#6e7072" stroke-width="1.8" fill="none"/></svg>
<div class="a" style="left:873px;top:52px;width:1px;height:28px;background:#55585a;"></div>
<svg class="a" style="left:887px;top:59px" width="26" height="22" viewBox="0 0 26 22"><path d="M0.5,8 Q10.5,-3.5 21.5,8 Q10.5,19.5 0.5,8 Z" fill="#c4c5c7"/><circle cx="11" cy="8" r="5.2" fill="#3c3f41"/><circle cx="11" cy="8" r="3.2" fill="#c4c5c7"/><polygon points="16,16 25,16 20.5,21" fill="#c4c5c7"/></svg>
<svg class="a" style="left:928px;top:57px" width="19" height="20" viewBox="0 0 19 20"><circle cx="9.5" cy="10" r="7.2" fill="#c4c5c7"/><rect x="7" y="0" width="5" height="20" rx="1.2" fill="#c4c5c7" transform="rotate(0 9.5 10)"/><rect x="7" y="0" width="5" height="20" rx="1.2" fill="#c4c5c7" transform="rotate(60 9.5 10)"/><rect x="7" y="0" width="5" height="20" rx="1.2" fill="#c4c5c7" transform="rotate(120 9.5 10)"/><circle cx="9.5" cy="10" r="3.2" fill="#3d3f41"/></svg>
<svg class="a" style="left:942px;top:75px" width="10" height="6" viewBox="0 0 10 6"><polygon points="0,0 9,0 4.5,5" fill="#c4c5c7"/></svg>
<svg class="a" style="left:31px;top:93px" width="26" height="17" viewBox="0 0 26 17"><circle cx="7" cy="7" r="5.6" fill="none" stroke="#a9abad" stroke-width="1.6"/><path d="M11,11 L15,15.5" stroke="#a9abad" stroke-width="1.8"/><polygon points="16,5 24,5 20,10" fill="#a9abad"/></svg>
<svg class="a" style="left:931px;top:91px" width="22" height="22" viewBox="0 0 22 22"><circle cx="11" cy="11" r="10" fill="#5a5c5e"/><path d="M6.5,6.5 L15.5,15.5 M15.5,6.5 L6.5,15.5" stroke="#2b2b2b" stroke-width="2"/></svg>
<svg class="a" style="left:94px;top:128px" width="23" height="22" viewBox="0 0 23 22"><rect x="0" y="0" width="7" height="18" fill="#9ea2a6"/><rect x="8.5" y="0" width="14" height="18" fill="#9ea2a6"/><rect x="10.5" y="5" width="4" height="2.5" fill="#3c3e40"/><rect x="16" y="5" width="4.5" height="2.5" fill="#3c3e40"/><rect x="10.5" y="9.5" width="4" height="2.5" fill="#3c3e40"/><rect x="16" y="9.5" width="4.5" height="2.5" fill="#3c3e40"/><rect x="10.5" y="14" width="4" height="2.5" fill="#3c3e40"/><rect x="16" y="14" width="4.5" height="2.5" fill="#3c3e40"/><circle cx="3.8" cy="17.5" r="3.8" fill="#b9bcc0" stroke="#3c3e40" stroke-width="0.8"/></svg>
<svg class="a" style="left:382px;top:128px" width="23" height="22" viewBox="0 0 23 22"><rect x="0" y="0" width="7" height="18" fill="#9ea2a6"/><rect x="8.5" y="0" width="14" height="18" fill="#9ea2a6"/><rect x="10.5" y="5" width="4" height="2.5" fill="#3c3e40"/><rect x="16" y="5" width="4.5" height="2.5" fill="#3c3e40"/><rect x="10.5" y="9.5" width="4" height="2.5" fill="#3c3e40"/><rect x="16" y="9.5" width="4.5" height="2.5" fill="#3c3e40"/><rect x="10.5" y="14" width="4" height="2.5" fill="#3c3e40"/><rect x="16" y="14" width="4.5" height="2.5" fill="#3c3e40"/><circle cx="3.8" cy="17.5" r="3.8" fill="#b9bcc0" stroke="#3c3e40" stroke-width="0.8"/></svg>
<svg class="a" style="left:563px;top:128px" width="23" height="22" viewBox="0 0 23 22"><rect x="0" y="0" width="7" height="18" fill="#9ea2a6"/><rect x="8.5" y="0" width="14" height="18" fill="#9ea2a6"/><rect x="10.5" y="5" width="4" height="2.5" fill="#3c3e40"/><rect x="16" y="5" width="4.5" height="2.5" fill="#3c3e40"/><rect x="10.5" y="9.5" width="4" height="2.5" fill="#3c3e40"/><rect x="16" y="9.5" width="4.5" height="2.5" fill="#3c3e40"/><rect x="10.5" y="14" width="4" height="2.5" fill="#3c3e40"/><rect x="16" y="14" width="4.5" height="2.5" fill="#3c3e40"/></svg>
<svg class="a" style="left:827px;top:128px" width="23" height="22" viewBox="0 0 23 22"><rect x="0" y="0" width="7" height="18" fill="#9ea2a6"/><rect x="8.5" y="0" width="14" height="18" fill="#9ea2a6"/><rect x="10.5" y="5" width="4" height="2.5" fill="#3c3e40"/><rect x="16" y="5" width="4.5" height="2.5" fill="#3c3e40"/><rect x="10.5" y="9.5" width="4" height="2.5" fill="#3c3e40"/><rect x="16" y="9.5" width="4.5" height="2.5" fill="#3c3e40"/><rect x="10.5" y="14" width="4" height="2.5" fill="#3c3e40"/><rect x="16" y="14" width="4.5" height="2.5" fill="#3c3e40"/></svg>
<svg class="a" style="left:343px;top:131px" width="10" height="13" viewBox="0 0 10 13"><polygon points="5,0 9.5,5 0.5,5" fill="#a3a6a9"/><polygon points="5,13 9.5,8 0.5,8" fill="#a3a6a9"/></svg>
<svg class="a" style="left:521px;top:131px" width="10" height="13" viewBox="0 0 10 13"><polygon points="5,0 9.5,5 0.5,5" fill="#a3a6a9"/><polygon points="5,13 9.5,8 0.5,8" fill="#a3a6a9"/></svg>
<svg class="a" style="left:786px;top:131px" width="10" height="13" viewBox="0 0 10 13"><polygon points="5,0 9.5,5 0.5,5" fill="#a3a6a9"/><polygon points="5,13 9.5,8 0.5,8" fill="#a3a6a9"/></svg>
<div class="a" style="left:941px;top:117px;width:15px;height:39px;background:#3c3e40;"></div>
<div class="a" style="left:942px;top:158px;width:13px;height:83px;background:#5d5e60;"></div>
<div class="a" style="left:91px;top:1349px;width:602px;height:12px;background:#5d5e60;"></div>
</body></html>
